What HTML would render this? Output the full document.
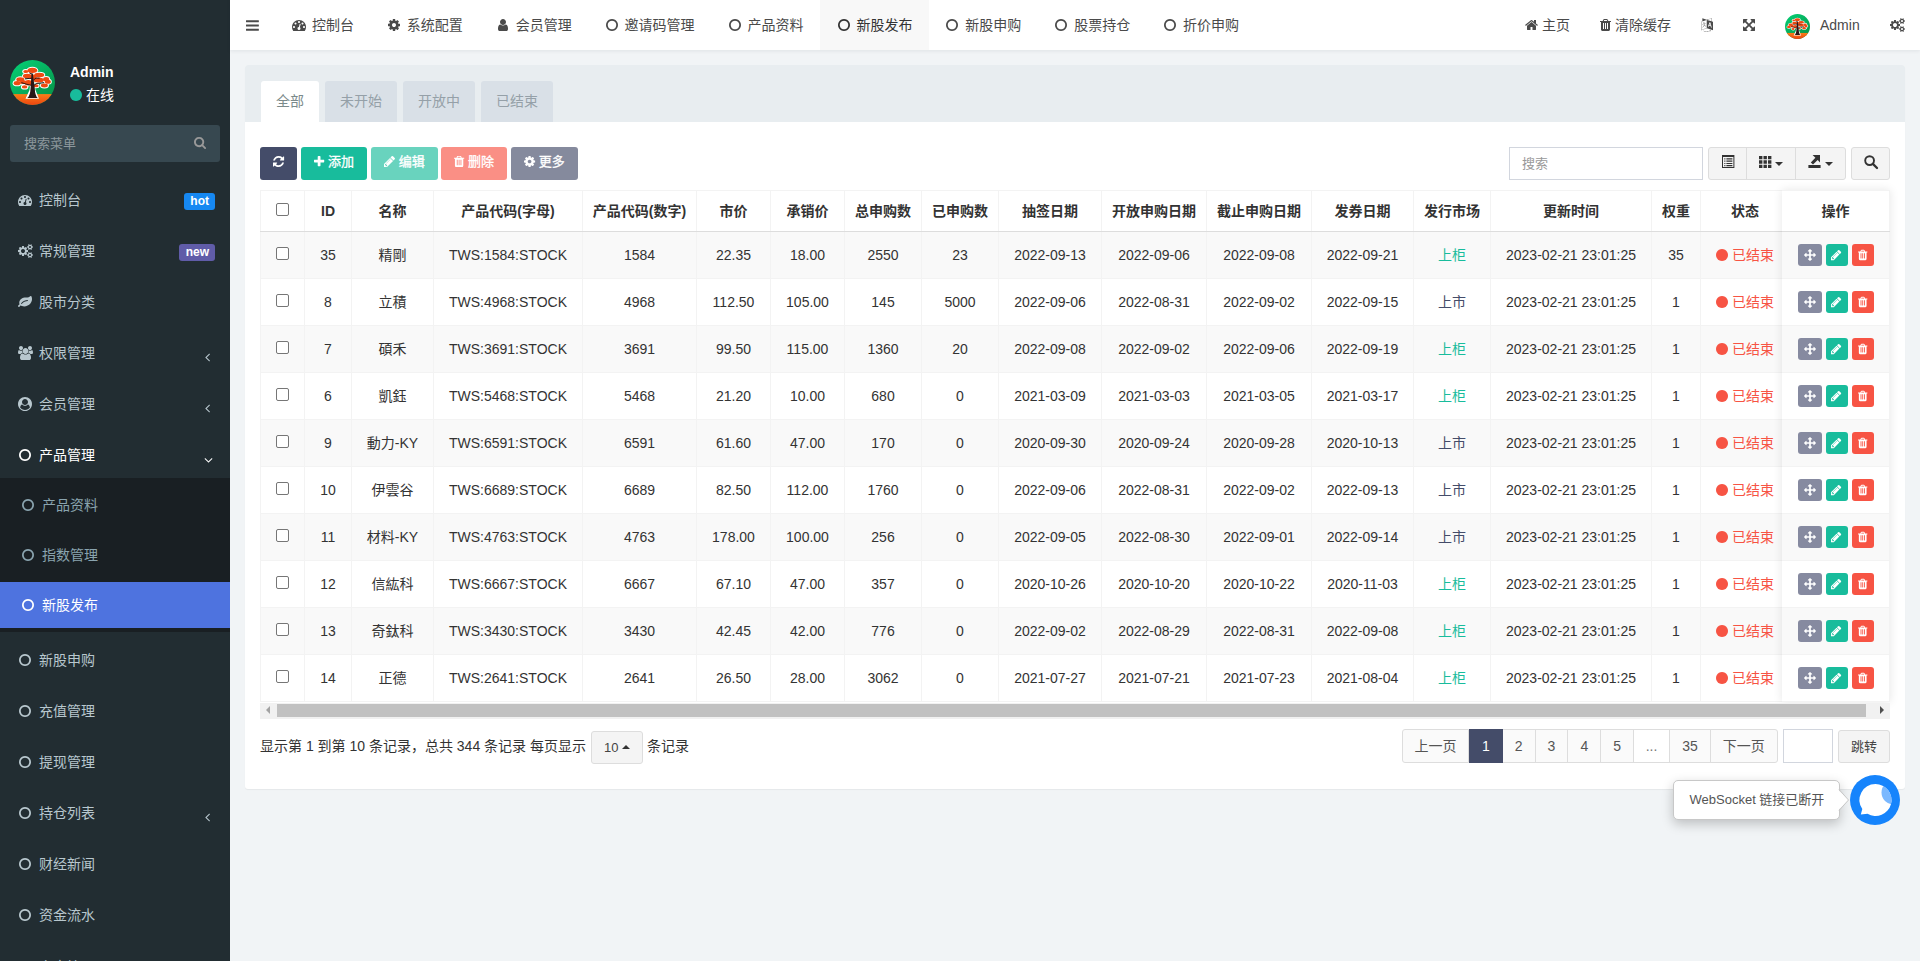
<!DOCTYPE html><html lang="zh-CN"><head><meta charset="utf-8"><title>新股发布</title><style>
*{box-sizing:border-box}
html,body{margin:0;padding:0}
body{width:1920px;height:961px;overflow:hidden;position:relative;background:#f1f4f6;font-family:"Liberation Sans","Noto Sans CJK SC",sans-serif;font-size:14px;line-height:20px;color:#333}
svg{display:inline-block;overflow:visible}
.abs{position:absolute}
#side{position:absolute;left:0;top:0;width:230px;height:961px;background:#222d32;overflow:hidden}
#side .uname{position:absolute;left:70px;top:62px;color:#fff;font-weight:bold;line-height:20px}
#side .ustat{position:absolute;left:70px;top:85px;color:#fff;line-height:20px;white-space:nowrap}
#side .sbox{position:absolute;left:10px;top:125px;width:210px;height:37px;background:#374850;border-radius:3px;color:#8d989d;font-size:13px;line-height:37px;padding-left:14px}
.mi{position:absolute;left:0;width:230px;height:46px;color:#b8c7ce;line-height:20px;padding:13px 5px 13px 15px;white-space:nowrap}
.mi .ib{display:inline-block;width:20px;text-align:center}
.mi.on{color:#fff}
.smi{position:absolute;left:0;width:230px;height:46px;color:#8aa4af;line-height:20px;padding:13px 5px 13px 18px;white-space:nowrap}
.smi .ib{display:inline-block;width:20px;text-align:center}
.smi.on{color:#fff;background:#4e73df}
.lab{position:absolute;right:15px;font-size:12px;font-weight:bold;color:#fff;line-height:12px;padding:2px 6px 3px;border-radius:3px}
.ang{position:absolute;}
#nav{position:absolute;left:230px;top:0;width:1690px;height:50px;background:#fff;box-shadow:0 1px 4px rgba(0,21,41,.08);color:#4a4a4a}
.tab{position:absolute;top:0;height:50px;line-height:50px;white-space:nowrap;padding:0 15px;color:#4a4a4a}
.tab.on{background:#f8f8f8;color:#333}
.nr{position:absolute;top:0;height:50px;line-height:50px;white-space:nowrap;color:#4a4a4a}
#panel{position:absolute;left:245px;top:65px;width:1660px;height:724px;background:#fff;border-radius:3px;box-shadow:0 1px 1px rgba(0,0,0,.05)}
#phead{position:absolute;left:0;top:0;width:1660px;height:57px;background:#e8edf0;border-radius:3px 3px 0 0}
.pt{position:absolute;top:16px;height:41px;line-height:20px;padding:10px 15px;background:#d9e0e7;color:#95a0a8;border-radius:3px 3px 0 0;white-space:nowrap}
.pt.on{background:#fff;color:#7b8a8b}
.btn{position:absolute;top:147px;height:33px;border-radius:3px;color:#fff;font-size:13px;line-height:28px;text-align:center;white-space:nowrap;border:1px solid transparent;-webkit-text-stroke:.3px #fff}
.bd{position:absolute;background:#f4f4f4;border:1px solid #ddd;color:#444}
table{border-collapse:collapse;table-layout:fixed;border-spacing:0}
th,td{padding:0;text-align:center;white-space:nowrap;overflow:hidden;border:1px solid #f3f3f3}
th{font-weight:bold;height:41px;border-bottom:1px solid #ddd;color:#333}
td{height:47px}
tbody tr:nth-child(odd) td{background:#f9f9f9}
tbody tr:nth-child(even) td{background:#fff}
td input,th input{}
.cb{display:inline-block;width:13px;height:13px;border:1px solid #767676;border-radius:2px;background:#fff;vertical-align:0px}
.ab{display:inline-block;height:22px;border-radius:3px;vertical-align:middle;color:#fff;text-align:center;line-height:22px;font-size:12px}
.pg{position:absolute;top:729px;height:34px;border:1px solid #ddd;background:#fafafa;color:#555;text-align:center;line-height:32px}
</style></head><body>
<div id="side">
<svg class="abs" style="left:10px;top:60px;width:45px;height:45px" viewBox="0 0 90 90"><defs><linearGradient id="ag45" x1="0.100" y1="0" x2="0.800" y2="1"><stop offset="0" stop-color="#05cf75"/><stop offset="1" stop-color="#079147"/></linearGradient><linearGradient id="og45" x1="0" y1="0" x2="0" y2="1"><stop offset="0" stop-color="#fa7d17"/><stop offset="1" stop-color="#ec4411"/></linearGradient><clipPath id="ac45"><circle cx="45" cy="45" r="45"/></clipPath></defs><g clip-path="url(#ac45)"><rect width="90" height="90" fill="url(#ag45)"/><rect y="68.200" width="90" height="22" fill="url(#og45)"/><g fill="#fff"><ellipse cx="44.7" cy="20.6" rx="11.7" ry="7.2"/><ellipse cx="31.5" cy="23.0" rx="7.0" ry="5.0"/><ellipse cx="34.4" cy="32.0" rx="10.5" ry="6.5"/><ellipse cx="58.5" cy="29.8" rx="12.0" ry="6.5"/><ellipse cx="20.6" cy="39.0" rx="10.0" ry="6.5"/><ellipse cx="14.3" cy="46.4" rx="9.0" ry="6.3"/><ellipse cx="36.7" cy="45.3" rx="9.5" ry="7.5"/><ellipse cx="57.3" cy="40.1" rx="12.5" ry="7.0"/><ellipse cx="72.2" cy="38.4" rx="8.0" ry="6.5"/><ellipse cx="75.7" cy="43.6" rx="8.0" ry="6.0"/><ellipse cx="29.2" cy="53.9" rx="7.5" ry="5.3"/><ellipse cx="52.2" cy="51.6" rx="7.0" ry="5.0"/><ellipse cx="68.8" cy="51.0" rx="9.0" ry="5.8"/><ellipse cx="46.0" cy="34.0" rx="9.0" ry="7.0"/><ellipse cx="26.0" cy="44.0" rx="8.0" ry="6.0"/><path d="M31 77.500L39 60L41.500 40h7L51 60L58 77.500Z"/></g><g fill="#ee4a11"><ellipse cx="44.7" cy="20.6" rx="9.7" ry="5.2"/><ellipse cx="31.5" cy="23.0" rx="5.0" ry="3.0"/><ellipse cx="34.4" cy="32.0" rx="8.5" ry="4.5"/><ellipse cx="58.5" cy="29.8" rx="10.0" ry="4.5"/><ellipse cx="20.6" cy="39.0" rx="8.0" ry="4.5"/><ellipse cx="14.3" cy="46.4" rx="7.0" ry="4.3"/><ellipse cx="36.7" cy="45.3" rx="7.5" ry="5.5"/><ellipse cx="57.3" cy="40.1" rx="10.5" ry="5.0"/><ellipse cx="72.2" cy="38.4" rx="6.0" ry="4.5"/><ellipse cx="75.7" cy="43.6" rx="6.0" ry="4.0"/><ellipse cx="29.2" cy="53.9" rx="5.5" ry="3.3"/><ellipse cx="52.2" cy="51.6" rx="5.0" ry="3.0"/><ellipse cx="68.8" cy="51.0" rx="7.0" ry="3.8"/><ellipse cx="46.0" cy="34.0" rx="7.0" ry="5.0"/><ellipse cx="26.0" cy="44.0" rx="6.0" ry="4.0"/></g><path d="M34.500 75.800Q40.500 72 41.200 56L43 27h2.600L49.500 56Q50 72 55.500 75.800Z" fill="#2a1717"/><g stroke="#2a1717" stroke-width="2" fill="none" stroke-linecap="round"><path d="M44.500 28.500L39.500 26"/><path d="M43.500 36.500L30.500 37.500"/><path d="M42 50.500L33.500 48.500L23.500 45.500"/><path d="M47 40L52 36L58.500 36.500"/><path d="M48.500 50L54 46.800L67.500 45.500"/></g></g></svg>
<div class="uname">Admin</div>
<div class="ustat"><svg viewBox="0 -1536 1536 1792" style="width:12.00px;height:14px;vertical-align:-2.00px;" fill="#18bc9c"><path transform="scale(1,-1)" d="M1536 640q0 -209 -103 -385.5t-279.5 -279.5t-385.5 -103t-385.5 103t-279.5 279.5t-103 385.5t103 385.5t279.5 279.5t385.5 103t385.5 -103t279.5 -279.5t103 -385.5z"/></svg> 在线</div>
<div class="sbox">搜索菜单<svg viewBox="0 -1536 1664 1792" style="width:12.07px;height:13px;vertical-align:-1.86px;position:absolute;left:184px;top:11px;" fill="#999"><path transform="scale(1,-1)" d="M1152 704q0 185 -131.5 316.5t-316.5 131.5t-316.5 -131.5t-131.5 -316.5t131.5 -316.5t316.5 -131.5t316.5 131.5t131.5 316.5zM1664 -128q0 -52 -38 -90t-90 -38q-54 0 -90 38l-343 342q-179 -124 -399 -124q-143 0 -273.5 55.5t-225 150t-150 225t-55.5 273.5 t55.5 273.5t150 225t225 150t273.5 55.5t273.5 -55.5t225 -150t150 -225t55.5 -273.5q0 -220 -124 -399l343 -343q37 -37 37 -90z"/></svg></div>
<div class="mi" style="top:177px"><span class="ib"><svg viewBox="0 -1536 1792 1792" style="width:14.00px;height:14px;vertical-align:-2.00px;" fill="currentColor"><path transform="scale(1,-1)" d="M384 384q0 53 -37.5 90.5t-90.5 37.5t-90.5 -37.5t-37.5 -90.5t37.5 -90.5t90.5 -37.5t90.5 37.5t37.5 90.5zM576 832q0 53 -37.5 90.5t-90.5 37.5t-90.5 -37.5t-37.5 -90.5t37.5 -90.5t90.5 -37.5t90.5 37.5t37.5 90.5zM1004 351l101 382q6 26 -7.5 48.5t-38.5 29.5 t-48 -6.5t-30 -39.5l-101 -382q-60 -5 -107 -43.5t-63 -98.5q-20 -77 20 -146t117 -89t146 20t89 117q16 60 -6 117t-72 91zM1664 384q0 53 -37.5 90.5t-90.5 37.5t-90.5 -37.5t-37.5 -90.5t37.5 -90.5t90.5 -37.5t90.5 37.5t37.5 90.5zM1024 1024q0 53 -37.5 90.5 t-90.5 37.5t-90.5 -37.5t-37.5 -90.5t37.5 -90.5t90.5 -37.5t90.5 37.5t37.5 90.5zM1472 832q0 53 -37.5 90.5t-90.5 37.5t-90.5 -37.5t-37.5 -90.5t37.5 -90.5t90.5 -37.5t90.5 37.5t37.5 90.5zM1792 384q0 -261 -141 -483q-19 -29 -54 -29h-1402q-35 0 -54 29 q-141 221 -141 483q0 182 71 348t191 286t286 191t348 71t348 -71t286 -191t191 -286t71 -348z"/></svg></span> <span>控制台</span><span class="lab" style="top:16px;background:#1688f2">hot</span></div>
<div class="mi" style="top:228px"><span class="ib"><svg viewBox="0 -1536 1920 1792" style="width:15.00px;height:14px;vertical-align:-2.00px;" fill="currentColor"><path transform="scale(1,-1)" d="M896 640q0 106 -75 181t-181 75t-181 -75t-75 -181t75 -181t181 -75t181 75t75 181zM1664 128q0 52 -38 90t-90 38t-90 -38t-38 -90q0 -53 37.5 -90.5t90.5 -37.5t90.5 37.5t37.5 90.5zM1664 1152q0 52 -38 90t-90 38t-90 -38t-38 -90q0 -53 37.5 -90.5t90.5 -37.5 t90.5 37.5t37.5 90.5zM1280 731v-185q0 -10 -7 -19.5t-16 -10.5l-155 -24q-11 -35 -32 -76q34 -48 90 -115q7 -11 7 -20q0 -12 -7 -19q-23 -30 -82.5 -89.5t-78.5 -59.5q-11 0 -21 7l-115 90q-37 -19 -77 -31q-11 -108 -23 -155q-7 -24 -30 -24h-186q-11 0 -20 7.5t-10 17.5 l-23 153q-34 10 -75 31l-118 -89q-7 -7 -20 -7q-11 0 -21 8q-144 133 -144 160q0 9 7 19q10 14 41 53t47 61q-23 44 -35 82l-152 24q-10 1 -17 9.5t-7 19.5v185q0 10 7 19.5t16 10.5l155 24q11 35 32 76q-34 48 -90 115q-7 11 -7 20q0 12 7 20q22 30 82 89t79 59q11 0 21 -7 l115 -90q34 18 77 32q11 108 23 154q7 24 30 24h186q11 0 20 -7.5t10 -17.5l23 -153q34 -10 75 -31l118 89q8 7 20 7q11 0 21 -8q144 -133 144 -160q0 -8 -7 -19q-12 -16 -42 -54t-45 -60q23 -48 34 -82l152 -23q10 -2 17 -10.5t7 -19.5zM1920 198v-140q0 -16 -149 -31 q-12 -27 -30 -52q51 -113 51 -138q0 -4 -4 -7q-122 -71 -124 -71q-8 0 -46 47t-52 68q-20 -2 -30 -2t-30 2q-14 -21 -52 -68t-46 -47q-2 0 -124 71q-4 3 -4 7q0 25 51 138q-18 25 -30 52q-149 15 -149 31v140q0 16 149 31q13 29 30 52q-51 113 -51 138q0 4 4 7q4 2 35 20 t59 34t30 16q8 0 46 -46.5t52 -67.5q20 2 30 2t30 -2q51 71 92 112l6 2q4 0 124 -70q4 -3 4 -7q0 -25 -51 -138q17 -23 30 -52q149 -15 149 -31zM1920 1222v-140q0 -16 -149 -31q-12 -27 -30 -52q51 -113 51 -138q0 -4 -4 -7q-122 -71 -124 -71q-8 0 -46 47t-52 68 q-20 -2 -30 -2t-30 2q-14 -21 -52 -68t-46 -47q-2 0 -124 71q-4 3 -4 7q0 25 51 138q-18 25 -30 52q-149 15 -149 31v140q0 16 149 31q13 29 30 52q-51 113 -51 138q0 4 4 7q4 2 35 20t59 34t30 16q8 0 46 -46.5t52 -67.5q20 2 30 2t30 -2q51 71 92 112l6 2q4 0 124 -70 q4 -3 4 -7q0 -25 -51 -138q17 -23 30 -52q149 -15 149 -31z"/></svg></span> <span>常规管理</span><span class="lab" style="top:16px;background:#605ca8;padding-left:7px">new</span></div>
<div class="mi" style="top:279px"><span class="ib"><svg viewBox="0 -1536 1792 1792" style="width:14.00px;height:14px;vertical-align:-2.00px;" fill="currentColor"><path transform="scale(1,-1)" d="M1280 832q0 26 -19 45t-45 19q-172 0 -318 -49.5t-259.5 -134t-235.5 -219.5q-19 -21 -19 -45q0 -26 19 -45t45 -19q24 0 45 19q27 24 74 71t67 66q137 124 268.5 176t313.5 52q26 0 45 19t19 45zM1792 1030q0 -95 -20 -193q-46 -224 -184.5 -383t-357.5 -268 q-214 -108 -438 -108q-148 0 -286 47q-15 5 -88 42t-96 37q-16 0 -39.5 -32t-45 -70t-52.5 -70t-60 -32q-43 0 -63.5 17.5t-45.5 59.5q-2 4 -6 11t-5.5 10t-3 9.5t-1.5 13.5q0 35 31 73.5t68 65.5t68 56t31 48q0 4 -14 38t-16 44q-9 51 -9 104q0 115 43.5 220t119 184.5 t170.5 139t204 95.5q55 18 145 25.5t179.5 9t178.5 6t163.5 24t113.5 56.5l29.5 29.5t29.5 28t27 20t36.5 16t43.5 4.5q39 0 70.5 -46t47.5 -112t24 -124t8 -96z"/></svg></span> <span>股市分类</span></div>
<div class="mi" style="top:330px"><span class="ib"><svg viewBox="0 -1536 1920 1792" style="width:15.00px;height:14px;vertical-align:-2.00px;" fill="currentColor"><path transform="scale(1,-1)" d="M593 640q-162 -5 -265 -128h-134q-82 0 -138 40.5t-56 118.5q0 353 124 353q6 0 43.5 -21t97.5 -42.5t119 -21.5q67 0 133 23q-5 -37 -5 -66q0 -139 81 -256zM1664 3q0 -120 -73 -189.5t-194 -69.5h-874q-121 0 -194 69.5t-73 189.5q0 53 3.5 103.5t14 109t26.5 108.5 t43 97.5t62 81t85.5 53.5t111.5 20q10 0 43 -21.5t73 -48t107 -48t135 -21.5t135 21.5t107 48t73 48t43 21.5q61 0 111.5 -20t85.5 -53.5t62 -81t43 -97.5t26.5 -108.5t14 -109t3.5 -103.5zM640 1280q0 -106 -75 -181t-181 -75t-181 75t-75 181t75 181t181 75t181 -75 t75 -181zM1344 896q0 -159 -112.5 -271.5t-271.5 -112.5t-271.5 112.5t-112.5 271.5t112.5 271.5t271.5 112.5t271.5 -112.5t112.5 -271.5zM1920 671q0 -78 -56 -118.5t-138 -40.5h-134q-103 123 -265 128q81 117 81 256q0 29 -5 66q66 -23 133 -23q59 0 119 21.5t97.5 42.5 t43.5 21q124 0 124 -353zM1792 1280q0 -106 -75 -181t-181 -75t-181 75t-75 181t75 181t181 75t181 -75t75 -181z"/></svg></span> <span>权限管理</span><svg viewBox="0 -1536 640 1792" style="width:5.00px;height:14px;vertical-align:-2.00px;position:absolute;left:205px;top:20px;" fill="currentColor"><path transform="scale(1,-1)" d="M627 992q0 -13 -10 -23l-393 -393l393 -393q10 -10 10 -23t-10 -23l-50 -50q-10 -10 -23 -10t-23 10l-466 466q-10 10 -10 23t10 23l466 466q10 10 23 10t23 -10l50 -50q10 -10 10 -23z"/></svg></div>
<div class="mi" style="top:381px"><span class="ib"><svg viewBox="0 -1536 1792 1792" style="width:14.00px;height:14px;vertical-align:-2.00px;" fill="currentColor"><path transform="scale(1,-1)" d="M1523 197q-22 155 -87.5 257.5t-184.5 118.5q-67 -74 -159.5 -115.5t-195.5 -41.5t-195.5 41.5t-159.5 115.5q-119 -16 -184.5 -118.5t-87.5 -257.5q106 -150 271 -237.5t356 -87.5t356 87.5t271 237.5zM1280 896q0 159 -112.5 271.5t-271.5 112.5t-271.5 -112.5 t-112.5 -271.5t112.5 -271.5t271.5 -112.5t271.5 112.5t112.5 271.5zM1792 640q0 -182 -71 -347.5t-190.5 -286t-285.5 -191.5t-349 -71q-182 0 -348 71t-286 191t-191 286t-71 348t71 348t191 286t286 191t348 71t348 -71t286 -191t191 -286t71 -348z"/></svg></span> <span>会员管理</span><svg viewBox="0 -1536 640 1792" style="width:5.00px;height:14px;vertical-align:-2.00px;position:absolute;left:205px;top:20px;" fill="currentColor"><path transform="scale(1,-1)" d="M627 992q0 -13 -10 -23l-393 -393l393 -393q10 -10 10 -23t-10 -23l-50 -50q-10 -10 -23 -10t-23 10l-466 466q-10 10 -10 23t10 23l466 466q10 10 23 10t23 -10l50 -50q10 -10 10 -23z"/></svg></div>
<div class="mi on" style="top:432px"><span class="ib"><svg viewBox="0 -1536 1536 1792" style="width:12.00px;height:14px;vertical-align:-2.00px;" fill="currentColor"><path transform="scale(1,-1)" d="M768 1184q-148 0 -273 -73t-198 -198t-73 -273t73 -273t198 -198t273 -73t273 73t198 198t73 273t-73 273t-198 198t-273 73zM1536 640q0 -209 -103 -385.5t-279.5 -279.5t-385.5 -103t-385.5 103t-279.5 279.5t-103 385.5t103 385.5t279.5 279.5t385.5 103t385.5 -103 t279.5 -279.5t103 -385.5z"/></svg></span> <span>产品管理</span><svg viewBox="0 -1536 1152 1792" style="width:9.00px;height:14px;vertical-align:-2.00px;position:absolute;left:204px;top:21px;" fill="currentColor"><path transform="scale(1,-1)" d="M1075 800q0 -13 -10 -23l-466 -466q-10 -10 -23 -10t-23 10l-466 466q-10 10 -10 23t10 23l50 50q10 10 23 10t23 -10l393 -393l393 393q10 10 23 10t23 -10l50 -50q10 -10 10 -23z"/></svg></div>
<div class="abs" style="left:0;top:478px;width:230px;height:154px;background:#191f23"></div>
<div class="smi" style="top:482px"><span class="ib"><svg viewBox="0 -1536 1536 1792" style="width:12.00px;height:14px;vertical-align:-2.00px;" fill="currentColor"><path transform="scale(1,-1)" d="M768 1184q-148 0 -273 -73t-198 -198t-73 -273t73 -273t198 -198t273 -73t273 73t198 198t73 273t-73 273t-198 198t-273 73zM1536 640q0 -209 -103 -385.5t-279.5 -279.5t-385.5 -103t-385.5 103t-279.5 279.5t-103 385.5t103 385.5t279.5 279.5t385.5 103t385.5 -103 t279.5 -279.5t103 -385.5z"/></svg></span> <span>产品资料</span></div>
<div class="smi" style="top:532px"><span class="ib"><svg viewBox="0 -1536 1536 1792" style="width:12.00px;height:14px;vertical-align:-2.00px;" fill="currentColor"><path transform="scale(1,-1)" d="M768 1184q-148 0 -273 -73t-198 -198t-73 -273t73 -273t198 -198t273 -73t273 73t198 198t73 273t-73 273t-198 198t-273 73zM1536 640q0 -209 -103 -385.5t-279.5 -279.5t-385.5 -103t-385.5 103t-279.5 279.5t-103 385.5t103 385.5t279.5 279.5t385.5 103t385.5 -103 t279.5 -279.5t103 -385.5z"/></svg></span> <span>指数管理</span></div>
<div class="smi on" style="top:582px"><span class="ib"><svg viewBox="0 -1536 1536 1792" style="width:12.00px;height:14px;vertical-align:-2.00px;" fill="currentColor"><path transform="scale(1,-1)" d="M768 1184q-148 0 -273 -73t-198 -198t-73 -273t73 -273t198 -198t273 -73t273 73t198 198t73 273t-73 273t-198 198t-273 73zM1536 640q0 -209 -103 -385.5t-279.5 -279.5t-385.5 -103t-385.5 103t-279.5 279.5t-103 385.5t103 385.5t279.5 279.5t385.5 103t385.5 -103 t279.5 -279.5t103 -385.5z"/></svg></span> <span>新股发布</span></div>
<div class="mi" style="top:637px"><span class="ib"><svg viewBox="0 -1536 1536 1792" style="width:12.00px;height:14px;vertical-align:-2.00px;" fill="currentColor"><path transform="scale(1,-1)" d="M768 1184q-148 0 -273 -73t-198 -198t-73 -273t73 -273t198 -198t273 -73t273 73t198 198t73 273t-73 273t-198 198t-273 73zM1536 640q0 -209 -103 -385.5t-279.5 -279.5t-385.5 -103t-385.5 103t-279.5 279.5t-103 385.5t103 385.5t279.5 279.5t385.5 103t385.5 -103 t279.5 -279.5t103 -385.5z"/></svg></span> <span>新股申购</span></div>
<div class="mi" style="top:688px"><span class="ib"><svg viewBox="0 -1536 1536 1792" style="width:12.00px;height:14px;vertical-align:-2.00px;" fill="currentColor"><path transform="scale(1,-1)" d="M768 1184q-148 0 -273 -73t-198 -198t-73 -273t73 -273t198 -198t273 -73t273 73t198 198t73 273t-73 273t-198 198t-273 73zM1536 640q0 -209 -103 -385.5t-279.5 -279.5t-385.5 -103t-385.5 103t-279.5 279.5t-103 385.5t103 385.5t279.5 279.5t385.5 103t385.5 -103 t279.5 -279.5t103 -385.5z"/></svg></span> <span>充值管理</span></div>
<div class="mi" style="top:739px"><span class="ib"><svg viewBox="0 -1536 1536 1792" style="width:12.00px;height:14px;vertical-align:-2.00px;" fill="currentColor"><path transform="scale(1,-1)" d="M768 1184q-148 0 -273 -73t-198 -198t-73 -273t73 -273t198 -198t273 -73t273 73t198 198t73 273t-73 273t-198 198t-273 73zM1536 640q0 -209 -103 -385.5t-279.5 -279.5t-385.5 -103t-385.5 103t-279.5 279.5t-103 385.5t103 385.5t279.5 279.5t385.5 103t385.5 -103 t279.5 -279.5t103 -385.5z"/></svg></span> <span>提现管理</span></div>
<div class="mi" style="top:790px"><span class="ib"><svg viewBox="0 -1536 1536 1792" style="width:12.00px;height:14px;vertical-align:-2.00px;" fill="currentColor"><path transform="scale(1,-1)" d="M768 1184q-148 0 -273 -73t-198 -198t-73 -273t73 -273t198 -198t273 -73t273 73t198 198t73 273t-73 273t-198 198t-273 73zM1536 640q0 -209 -103 -385.5t-279.5 -279.5t-385.5 -103t-385.5 103t-279.5 279.5t-103 385.5t103 385.5t279.5 279.5t385.5 103t385.5 -103 t279.5 -279.5t103 -385.5z"/></svg></span> <span>持仓列表</span><svg viewBox="0 -1536 640 1792" style="width:5.00px;height:14px;vertical-align:-2.00px;position:absolute;left:205px;top:20px;" fill="currentColor"><path transform="scale(1,-1)" d="M627 992q0 -13 -10 -23l-393 -393l393 -393q10 -10 10 -23t-10 -23l-50 -50q-10 -10 -23 -10t-23 10l-466 466q-10 10 -10 23t10 23l466 466q10 10 23 10t23 -10l50 -50q10 -10 10 -23z"/></svg></div>
<div class="mi" style="top:841px"><span class="ib"><svg viewBox="0 -1536 1536 1792" style="width:12.00px;height:14px;vertical-align:-2.00px;" fill="currentColor"><path transform="scale(1,-1)" d="M768 1184q-148 0 -273 -73t-198 -198t-73 -273t73 -273t198 -198t273 -73t273 73t198 198t73 273t-73 273t-198 198t-273 73zM1536 640q0 -209 -103 -385.5t-279.5 -279.5t-385.5 -103t-385.5 103t-279.5 279.5t-103 385.5t103 385.5t279.5 279.5t385.5 103t385.5 -103 t279.5 -279.5t103 -385.5z"/></svg></span> <span>财经新闻</span></div>
<div class="mi" style="top:892px"><span class="ib"><svg viewBox="0 -1536 1536 1792" style="width:12.00px;height:14px;vertical-align:-2.00px;" fill="currentColor"><path transform="scale(1,-1)" d="M768 1184q-148 0 -273 -73t-198 -198t-73 -273t73 -273t198 -198t273 -73t273 73t198 198t73 273t-73 273t-198 198t-273 73zM1536 640q0 -209 -103 -385.5t-279.5 -279.5t-385.5 -103t-385.5 103t-279.5 279.5t-103 385.5t103 385.5t279.5 279.5t385.5 103t385.5 -103 t279.5 -279.5t103 -385.5z"/></svg></span> <span>资金流水</span></div>
<div class="mi" style="top:944px"><span class="ib"><svg viewBox="0 -1536 2048 1792" style="width:16.00px;height:14px;vertical-align:-2.00px;" fill="currentColor"><path transform="scale(1,-1)" d="M1024 1024h-384v-384h384v384zM1152 384v-128h-640v128h640zM1152 1152v-640h-640v640h640zM1792 384v-128h-512v128h512zM1792 640v-128h-512v128h512zM1792 896v-128h-512v128h512zM1792 1152v-128h-512v128h512zM256 192v960h-128v-960q0 -26 19 -45t45 -19t45 19 t19 45zM1920 192v1088h-1536v-1088q0 -33 -11 -64h1483q26 0 45 19t19 45zM2048 1408v-1216q0 -80 -56 -136t-136 -56h-1664q-80 0 -136 56t-56 136v1088h256v128h1792z"/></svg></span> <span>文章管理</span></div>
</div>
<div id="nav">
<svg viewBox="0 -1536 1536 1792" style="width:12.86px;height:15px;vertical-align:-2.14px;position:absolute;left:16px;top:17.5px;" fill="#4a4a4a"><path transform="scale(1,-1)" d="M1536 192v-128q0 -26 -19 -45t-45 -19h-1408q-26 0 -45 19t-19 45v128q0 26 19 45t45 19h1408q26 0 45 -19t19 -45zM1536 704v-128q0 -26 -19 -45t-45 -19h-1408q-26 0 -45 19t-19 45v128q0 26 19 45t45 19h1408q26 0 45 -19t19 -45zM1536 1216v-128q0 -26 -19 -45 t-45 -19h-1408q-26 0 -45 19t-19 45v128q0 26 19 45t45 19h1408q26 0 45 -19t19 -45z"/></svg>
<div class="tab" style="left:45.0px;width:95.0px"><svg viewBox="0 -1536 1792 1792" style="width:14.00px;height:14px;vertical-align:-2.00px;margin:0 2.00px;" fill="currentColor"><path transform="scale(1,-1)" d="M384 384q0 53 -37.5 90.5t-90.5 37.5t-90.5 -37.5t-37.5 -90.5t37.5 -90.5t90.5 -37.5t90.5 37.5t37.5 90.5zM576 832q0 53 -37.5 90.5t-90.5 37.5t-90.5 -37.5t-37.5 -90.5t37.5 -90.5t90.5 -37.5t90.5 37.5t37.5 90.5zM1004 351l101 382q6 26 -7.5 48.5t-38.5 29.5 t-48 -6.5t-30 -39.5l-101 -382q-60 -5 -107 -43.5t-63 -98.5q-20 -77 20 -146t117 -89t146 20t89 117q16 60 -6 117t-72 91zM1664 384q0 53 -37.5 90.5t-90.5 37.5t-90.5 -37.5t-37.5 -90.5t37.5 -90.5t90.5 -37.5t90.5 37.5t37.5 90.5zM1024 1024q0 53 -37.5 90.5 t-90.5 37.5t-90.5 -37.5t-37.5 -90.5t37.5 -90.5t90.5 -37.5t90.5 37.5t37.5 90.5zM1472 832q0 53 -37.5 90.5t-90.5 37.5t-90.5 -37.5t-37.5 -90.5t37.5 -90.5t90.5 -37.5t90.5 37.5t37.5 90.5zM1792 384q0 -261 -141 -483q-19 -29 -54 -29h-1402q-35 0 -54 29 q-141 221 -141 483q0 182 71 348t191 286t286 191t348 71t348 -71t286 -191t191 -286t71 -348z"/></svg> 控制台</div>
<div class="tab" style="left:139.9px;width:109.0px"><svg viewBox="0 -1536 1536 1792" style="width:12.00px;height:14px;vertical-align:-2.00px;margin:0 3.00px;" fill="currentColor"><path transform="scale(1,-1)" d="M1024 640q0 106 -75 181t-181 75t-181 -75t-75 -181t75 -181t181 -75t181 75t75 181zM1536 749v-222q0 -12 -8 -23t-20 -13l-185 -28q-19 -54 -39 -91q35 -50 107 -138q10 -12 10 -25t-9 -23q-27 -37 -99 -108t-94 -71q-12 0 -26 9l-138 108q-44 -23 -91 -38 q-16 -136 -29 -186q-7 -28 -36 -28h-222q-14 0 -24.5 8.5t-11.5 21.5l-28 184q-49 16 -90 37l-141 -107q-10 -9 -25 -9q-14 0 -25 11q-126 114 -165 168q-7 10 -7 23q0 12 8 23q15 21 51 66.5t54 70.5q-27 50 -41 99l-183 27q-13 2 -21 12.5t-8 23.5v222q0 12 8 23t19 13 l186 28q14 46 39 92q-40 57 -107 138q-10 12 -10 24q0 10 9 23q26 36 98.5 107.5t94.5 71.5q13 0 26 -10l138 -107q44 23 91 38q16 136 29 186q7 28 36 28h222q14 0 24.5 -8.5t11.5 -21.5l28 -184q49 -16 90 -37l142 107q9 9 24 9q13 0 25 -10q129 -119 165 -170q7 -8 7 -22 q0 -12 -8 -23q-15 -21 -51 -66.5t-54 -70.5q26 -50 41 -98l183 -28q13 -2 21 -12.5t8 -23.5z"/></svg> 系统配置</div>
<div class="tab" style="left:248.8px;width:109.0px"><svg viewBox="0 -1536 1280 1792" style="width:10.00px;height:14px;vertical-align:-2.00px;margin:0 4.00px;" fill="currentColor"><path transform="scale(1,-1)" d="M1280 137q0 -109 -62.5 -187t-150.5 -78h-854q-88 0 -150.5 78t-62.5 187q0 85 8.5 160.5t31.5 152t58.5 131t94 89t134.5 34.5q131 -128 313 -128t313 128q76 0 134.5 -34.5t94 -89t58.5 -131t31.5 -152t8.5 -160.5zM1024 1024q0 -159 -112.5 -271.5t-271.5 -112.5 t-271.5 112.5t-112.5 271.5t112.5 271.5t271.5 112.5t271.5 -112.5t112.5 -271.5z"/></svg> 会员管理</div>
<div class="tab" style="left:357.7px;width:123.0px"><svg viewBox="0 -1536 1536 1792" style="width:12.00px;height:14px;vertical-align:-2.00px;margin:0 3.00px;" fill="currentColor"><path transform="scale(1,-1)" d="M768 1184q-148 0 -273 -73t-198 -198t-73 -273t73 -273t198 -198t273 -73t273 73t198 198t73 273t-73 273t-198 198t-273 73zM1536 640q0 -209 -103 -385.5t-279.5 -279.5t-385.5 -103t-385.5 103t-279.5 279.5t-103 385.5t103 385.5t279.5 279.5t385.5 103t385.5 -103 t279.5 -279.5t103 -385.5z"/></svg> 邀请码管理</div>
<div class="tab" style="left:480.6px;width:109.0px"><svg viewBox="0 -1536 1536 1792" style="width:12.00px;height:14px;vertical-align:-2.00px;margin:0 3.00px;" fill="currentColor"><path transform="scale(1,-1)" d="M768 1184q-148 0 -273 -73t-198 -198t-73 -273t73 -273t198 -198t273 -73t273 73t198 198t73 273t-73 273t-198 198t-273 73zM1536 640q0 -209 -103 -385.5t-279.5 -279.5t-385.5 -103t-385.5 103t-279.5 279.5t-103 385.5t103 385.5t279.5 279.5t385.5 103t385.5 -103 t279.5 -279.5t103 -385.5z"/></svg> 产品资料</div>
<div class="tab on" style="left:589.5px;width:109.0px"><svg viewBox="0 -1536 1536 1792" style="width:12.00px;height:14px;vertical-align:-2.00px;margin:0 3.00px;" fill="currentColor"><path transform="scale(1,-1)" d="M768 1184q-148 0 -273 -73t-198 -198t-73 -273t73 -273t198 -198t273 -73t273 73t198 198t73 273t-73 273t-198 198t-273 73zM1536 640q0 -209 -103 -385.5t-279.5 -279.5t-385.5 -103t-385.5 103t-279.5 279.5t-103 385.5t103 385.5t279.5 279.5t385.5 103t385.5 -103 t279.5 -279.5t103 -385.5z"/></svg> 新股发布</div>
<div class="tab" style="left:698.4px;width:109.0px"><svg viewBox="0 -1536 1536 1792" style="width:12.00px;height:14px;vertical-align:-2.00px;margin:0 3.00px;" fill="currentColor"><path transform="scale(1,-1)" d="M768 1184q-148 0 -273 -73t-198 -198t-73 -273t73 -273t198 -198t273 -73t273 73t198 198t73 273t-73 273t-198 198t-273 73zM1536 640q0 -209 -103 -385.5t-279.5 -279.5t-385.5 -103t-385.5 103t-279.5 279.5t-103 385.5t103 385.5t279.5 279.5t385.5 103t385.5 -103 t279.5 -279.5t103 -385.5z"/></svg> 新股申购</div>
<div class="tab" style="left:807.3px;width:109.0px"><svg viewBox="0 -1536 1536 1792" style="width:12.00px;height:14px;vertical-align:-2.00px;margin:0 3.00px;" fill="currentColor"><path transform="scale(1,-1)" d="M768 1184q-148 0 -273 -73t-198 -198t-73 -273t73 -273t198 -198t273 -73t273 73t198 198t73 273t-73 273t-198 198t-273 73zM1536 640q0 -209 -103 -385.5t-279.5 -279.5t-385.5 -103t-385.5 103t-279.5 279.5t-103 385.5t103 385.5t279.5 279.5t385.5 103t385.5 -103 t279.5 -279.5t103 -385.5z"/></svg> 股票持仓</div>
<div class="tab" style="left:916.2px;width:109.0px"><svg viewBox="0 -1536 1536 1792" style="width:12.00px;height:14px;vertical-align:-2.00px;margin:0 3.00px;" fill="currentColor"><path transform="scale(1,-1)" d="M768 1184q-148 0 -273 -73t-198 -198t-73 -273t73 -273t198 -198t273 -73t273 73t198 198t73 273t-73 273t-198 198t-273 73zM1536 640q0 -209 -103 -385.5t-279.5 -279.5t-385.5 -103t-385.5 103t-279.5 279.5t-103 385.5t103 385.5t279.5 279.5t385.5 103t385.5 -103 t279.5 -279.5t103 -385.5z"/></svg> 折价申购</div>
<div class="nr" style="left:1295px"><svg viewBox="0 -1536 1664 1792" style="width:13.00px;height:14px;vertical-align:-2.00px;" fill="currentColor"><path transform="scale(1,-1)" d="M1408 544v-480q0 -26 -19 -45t-45 -19h-384v384h-256v-384h-384q-26 0 -45 19t-19 45v480q0 1 0.5 3t0.5 3l575 474l575 -474q1 -2 1 -6zM1631 613l-62 -74q-8 -9 -21 -11h-3q-13 0 -21 7l-692 577l-692 -577q-12 -8 -24 -7q-13 2 -21 11l-62 74q-8 10 -7 23.5t11 21.5 l719 599q32 26 76 26t76 -26l244 -204v195q0 14 9 23t23 9h192q14 0 23 -9t9 -23v-408l219 -182q10 -8 11 -21.5t-7 -23.5z"/></svg> 主页</div>
<div class="nr" style="left:1370px"><svg viewBox="0 -1536 1408 1792" style="width:11.00px;height:14px;vertical-align:-2.00px;" fill="currentColor"><path transform="scale(1,-1)" d="M512 160v704q0 14 -9 23t-23 9h-64q-14 0 -23 -9t-9 -23v-704q0 -14 9 -23t23 -9h64q14 0 23 9t9 23zM768 160v704q0 14 -9 23t-23 9h-64q-14 0 -23 -9t-9 -23v-704q0 -14 9 -23t23 -9h64q14 0 23 9t9 23zM1024 160v704q0 14 -9 23t-23 9h-64q-14 0 -23 -9t-9 -23v-704 q0 -14 9 -23t23 -9h64q14 0 23 9t9 23zM480 1152h448l-48 117q-7 9 -17 11h-317q-10 -2 -17 -11zM1408 1120v-64q0 -14 -9 -23t-23 -9h-96v-948q0 -83 -47 -143.5t-113 -60.5h-832q-66 0 -113 58.5t-47 141.5v952h-96q-14 0 -23 9t-9 23v64q0 14 9 23t23 9h309l70 167 q15 37 54 63t79 26h320q40 0 79 -26t54 -63l70 -167h309q14 0 23 -9t9 -23z"/></svg> 清除缓存</div>
<div class="nr" style="left:1471px"><svg viewBox="0 -1536 1536 1792" style="width:12.00px;height:14px;vertical-align:-2.00px;" fill="currentColor"><path transform="scale(1,-1)" d="M654 458q-1 -3 -12.5 0.5t-31.5 11.5l-20 9q-44 20 -87 49q-7 5 -41 31.5t-38 28.5q-67 -103 -134 -181q-81 -95 -105 -110q-4 -2 -19.5 -4t-18.5 0q6 4 82 92q21 24 85.5 115t78.5 118q17 30 51 98.5t36 77.5q-8 1 -110 -33q-8 -2 -27.5 -7.5t-34.5 -9.5t-17 -5 q-2 -2 -2 -10.5t-1 -9.5q-5 -10 -31 -15q-23 -7 -47 0q-18 4 -28 21q-4 6 -5 23q6 2 24.5 5t29.5 6q58 16 105 32q100 35 102 35q10 2 43 19.5t44 21.5q9 3 21.5 8t14.5 5.5t6 -0.5q2 -12 -1 -33q0 -2 -12.5 -27t-26.5 -53.5t-17 -33.5q-25 -50 -77 -131l64 -28 q12 -6 74.5 -32t67.5 -28q4 -1 10.5 -25.5t4.5 -30.5zM449 944q3 -15 -4 -28q-12 -23 -50 -38q-30 -12 -60 -12q-26 3 -49 26q-14 15 -18 41l1 3q3 -3 19.5 -5t26.5 0t58 16q36 12 55 14q17 0 21 -17zM1147 815l63 -227l-139 42zM39 15l694 232v1032l-694 -233v-1031z M1280 332l102 -31l-181 657l-100 31l-216 -536l102 -31l45 110l211 -65zM777 1294l573 -184v380zM1088 -29l158 -13l-54 -160l-40 66q-130 -83 -276 -108q-58 -12 -91 -12h-84q-79 0 -199.5 39t-183.5 85q-8 7 -8 16q0 8 5 13.5t13 5.5q4 0 18 -7.5t30.5 -16.5t20.5 -11 q73 -37 159.5 -61.5t157.5 -24.5q95 0 167 14.5t157 50.5q15 7 30.5 15.5t34 19t28.5 16.5zM1536 1050v-1079l-774 246q-14 -6 -375 -127.5t-368 -121.5q-13 0 -18 13q0 1 -1 3v1078q3 9 4 10q5 6 20 11q107 36 149 50v384l558 -198q2 0 160.5 55t316 108.5t161.5 53.5 q20 0 20 -21v-418z"/></svg></div>
<div class="nr" style="left:1513px"><svg viewBox="0 -1536 1536 1792" style="width:12.00px;height:14px;vertical-align:-2.00px;" fill="currentColor"><path transform="scale(1,-1)" d="M1283 995l-355 -355l355 -355l144 144q29 31 70 14q39 -17 39 -59v-448q0 -26 -19 -45t-45 -19h-448q-42 0 -59 40q-17 39 14 69l144 144l-355 355l-355 -355l144 -144q31 -30 14 -69q-17 -40 -59 -40h-448q-26 0 -45 19t-19 45v448q0 42 40 59q39 17 69 -14l144 -144 l355 355l-355 355l-144 -144q-19 -19 -45 -19q-12 0 -24 5q-40 17 -40 59v448q0 26 19 45t45 19h448q42 0 59 -40q17 -39 -14 -69l-144 -144l355 -355l355 355l-144 144q-31 30 -14 69q17 40 59 40h448q26 0 45 -19t19 -45v-448q0 -42 -39 -59q-13 -5 -25 -5q-26 0 -45 19z"/></svg></div>
<svg class="abs" style="left:1555px;top:14px;width:25px;height:25px" viewBox="0 0 90 90"><defs><linearGradient id="ag25" x1="0.100" y1="0" x2="0.800" y2="1"><stop offset="0" stop-color="#05cf75"/><stop offset="1" stop-color="#079147"/></linearGradient><linearGradient id="og25" x1="0" y1="0" x2="0" y2="1"><stop offset="0" stop-color="#fa7d17"/><stop offset="1" stop-color="#ec4411"/></linearGradient><clipPath id="ac25"><circle cx="45" cy="45" r="45"/></clipPath></defs><g clip-path="url(#ac25)"><rect width="90" height="90" fill="url(#ag25)"/><rect y="68.200" width="90" height="22" fill="url(#og25)"/><g fill="#fff"><ellipse cx="44.7" cy="20.6" rx="11.7" ry="7.2"/><ellipse cx="31.5" cy="23.0" rx="7.0" ry="5.0"/><ellipse cx="34.4" cy="32.0" rx="10.5" ry="6.5"/><ellipse cx="58.5" cy="29.8" rx="12.0" ry="6.5"/><ellipse cx="20.6" cy="39.0" rx="10.0" ry="6.5"/><ellipse cx="14.3" cy="46.4" rx="9.0" ry="6.3"/><ellipse cx="36.7" cy="45.3" rx="9.5" ry="7.5"/><ellipse cx="57.3" cy="40.1" rx="12.5" ry="7.0"/><ellipse cx="72.2" cy="38.4" rx="8.0" ry="6.5"/><ellipse cx="75.7" cy="43.6" rx="8.0" ry="6.0"/><ellipse cx="29.2" cy="53.9" rx="7.5" ry="5.3"/><ellipse cx="52.2" cy="51.6" rx="7.0" ry="5.0"/><ellipse cx="68.8" cy="51.0" rx="9.0" ry="5.8"/><ellipse cx="46.0" cy="34.0" rx="9.0" ry="7.0"/><ellipse cx="26.0" cy="44.0" rx="8.0" ry="6.0"/><path d="M31 77.500L39 60L41.500 40h7L51 60L58 77.500Z"/></g><g fill="#ee4a11"><ellipse cx="44.7" cy="20.6" rx="9.7" ry="5.2"/><ellipse cx="31.5" cy="23.0" rx="5.0" ry="3.0"/><ellipse cx="34.4" cy="32.0" rx="8.5" ry="4.5"/><ellipse cx="58.5" cy="29.8" rx="10.0" ry="4.5"/><ellipse cx="20.6" cy="39.0" rx="8.0" ry="4.5"/><ellipse cx="14.3" cy="46.4" rx="7.0" ry="4.3"/><ellipse cx="36.7" cy="45.3" rx="7.5" ry="5.5"/><ellipse cx="57.3" cy="40.1" rx="10.5" ry="5.0"/><ellipse cx="72.2" cy="38.4" rx="6.0" ry="4.5"/><ellipse cx="75.7" cy="43.6" rx="6.0" ry="4.0"/><ellipse cx="29.2" cy="53.9" rx="5.5" ry="3.3"/><ellipse cx="52.2" cy="51.6" rx="5.0" ry="3.0"/><ellipse cx="68.8" cy="51.0" rx="7.0" ry="3.8"/><ellipse cx="46.0" cy="34.0" rx="7.0" ry="5.0"/><ellipse cx="26.0" cy="44.0" rx="6.0" ry="4.0"/></g><path d="M34.500 75.800Q40.500 72 41.200 56L43 27h2.600L49.500 56Q50 72 55.500 75.800Z" fill="#2a1717"/><g stroke="#2a1717" stroke-width="2" fill="none" stroke-linecap="round"><path d="M44.500 28.500L39.500 26"/><path d="M43.500 36.500L30.500 37.500"/><path d="M42 50.500L33.500 48.500L23.500 45.500"/><path d="M47 40L52 36L58.500 36.500"/><path d="M48.500 50L54 46.800L67.500 45.500"/></g></g></svg>
<div class="nr" style="left:1590px">Admin</div>
<div class="nr" style="left:1660px"><svg viewBox="0 -1536 1920 1792" style="width:15.00px;height:14px;vertical-align:-2.00px;" fill="currentColor"><path transform="scale(1,-1)" d="M896 640q0 106 -75 181t-181 75t-181 -75t-75 -181t75 -181t181 -75t181 75t75 181zM1664 128q0 52 -38 90t-90 38t-90 -38t-38 -90q0 -53 37.5 -90.5t90.5 -37.5t90.5 37.5t37.5 90.5zM1664 1152q0 52 -38 90t-90 38t-90 -38t-38 -90q0 -53 37.5 -90.5t90.5 -37.5 t90.5 37.5t37.5 90.5zM1280 731v-185q0 -10 -7 -19.5t-16 -10.5l-155 -24q-11 -35 -32 -76q34 -48 90 -115q7 -11 7 -20q0 -12 -7 -19q-23 -30 -82.5 -89.5t-78.5 -59.5q-11 0 -21 7l-115 90q-37 -19 -77 -31q-11 -108 -23 -155q-7 -24 -30 -24h-186q-11 0 -20 7.5t-10 17.5 l-23 153q-34 10 -75 31l-118 -89q-7 -7 -20 -7q-11 0 -21 8q-144 133 -144 160q0 9 7 19q10 14 41 53t47 61q-23 44 -35 82l-152 24q-10 1 -17 9.5t-7 19.5v185q0 10 7 19.5t16 10.5l155 24q11 35 32 76q-34 48 -90 115q-7 11 -7 20q0 12 7 20q22 30 82 89t79 59q11 0 21 -7 l115 -90q34 18 77 32q11 108 23 154q7 24 30 24h186q11 0 20 -7.5t10 -17.5l23 -153q34 -10 75 -31l118 89q8 7 20 7q11 0 21 -8q144 -133 144 -160q0 -8 -7 -19q-12 -16 -42 -54t-45 -60q23 -48 34 -82l152 -23q10 -2 17 -10.5t7 -19.5zM1920 198v-140q0 -16 -149 -31 q-12 -27 -30 -52q51 -113 51 -138q0 -4 -4 -7q-122 -71 -124 -71q-8 0 -46 47t-52 68q-20 -2 -30 -2t-30 2q-14 -21 -52 -68t-46 -47q-2 0 -124 71q-4 3 -4 7q0 25 51 138q-18 25 -30 52q-149 15 -149 31v140q0 16 149 31q13 29 30 52q-51 113 -51 138q0 4 4 7q4 2 35 20 t59 34t30 16q8 0 46 -46.5t52 -67.5q20 2 30 2t30 -2q51 71 92 112l6 2q4 0 124 -70q4 -3 4 -7q0 -25 -51 -138q17 -23 30 -52q149 -15 149 -31zM1920 1222v-140q0 -16 -149 -31q-12 -27 -30 -52q51 -113 51 -138q0 -4 -4 -7q-122 -71 -124 -71q-8 0 -46 47t-52 68 q-20 -2 -30 -2t-30 2q-14 -21 -52 -68t-46 -47q-2 0 -124 71q-4 3 -4 7q0 25 51 138q-18 25 -30 52q-149 15 -149 31v140q0 16 149 31q13 29 30 52q-51 113 -51 138q0 4 4 7q4 2 35 20t59 34t30 16q8 0 46 -46.5t52 -67.5q20 2 30 2t30 -2q51 71 92 112l6 2q4 0 124 -70 q4 -3 4 -7q0 -25 -51 -138q17 -23 30 -52q149 -15 149 -31z"/></svg></div>
</div>
<div id="panel"><div id="phead">
<div class="pt on" style="left:16px;width:58px">全部</div>
<div class="pt" style="left:80px;width:72px">未开始</div>
<div class="pt" style="left:158px;width:72px">开放中</div>
<div class="pt" style="left:236px;width:72px">已结束</div>
</div></div>
<div class="btn" style="left:260px;width:37px;background:#444c69"><svg viewBox="0 -1536 1536 1792" style="width:11.14px;height:13px;vertical-align:-1.86px;" fill="currentColor"><path transform="scale(1,-1)" d="M1511 480q0 -5 -1 -7q-64 -268 -268 -434.5t-478 -166.5q-146 0 -282.5 55t-243.5 157l-129 -129q-19 -19 -45 -19t-45 19t-19 45v448q0 26 19 45t45 19h448q26 0 45 -19t19 -45t-19 -45l-137 -137q71 -66 161 -102t187 -36q134 0 250 65t186 179q11 17 53 117 q8 23 30 23h192q13 0 22.5 -9.5t9.5 -22.5zM1536 1280v-448q0 -26 -19 -45t-45 -19h-448q-26 0 -45 19t-19 45t19 45l138 138q-148 137 -349 137q-134 0 -250 -65t-186 -179q-11 -17 -53 -117q-8 -23 -30 -23h-199q-13 0 -22.5 9.5t-9.5 22.5v7q65 268 270 434.5t480 166.5 q146 0 284 -55.5t245 -156.5l130 129q19 19 45 19t45 -19t19 -45z"/></svg></div>
<div class="btn" style="left:301px;width:66px;background:#18bc9c"><svg viewBox="0 -1536 1408 1792" style="width:10.21px;height:13px;vertical-align:-1.86px;" fill="currentColor"><path transform="scale(1,-1)" d="M1408 800v-192q0 -40 -28 -68t-68 -28h-416v-416q0 -40 -28 -68t-68 -28h-192q-40 0 -68 28t-28 68v416h-416q-40 0 -68 28t-28 68v192q0 40 28 68t68 28h416v416q0 40 28 68t68 28h192q40 0 68 -28t28 -68v-416h416q40 0 68 -28t28 -68z"/></svg> 添加</div>
<div class="btn" style="left:371px;width:67px;background:#69d3be"><svg viewBox="0 -1536 1536 1792" style="width:11.14px;height:13px;vertical-align:-1.86px;" fill="currentColor"><path transform="scale(1,-1)" d="M363 0l91 91l-235 235l-91 -91v-107h128v-128h107zM886 928q0 22 -22 22q-10 0 -17 -7l-542 -542q-7 -7 -7 -17q0 -22 22 -22q10 0 17 7l542 542q7 7 7 17zM832 1120l416 -416l-832 -832h-416v416zM1515 1024q0 -53 -37 -90l-166 -166l-416 416l166 165q36 38 90 38 q53 0 91 -38l235 -234q37 -39 37 -91z"/></svg> 编辑</div>
<div class="btn" style="left:441px;width:66px;background:#fa8f85"><svg viewBox="0 -1536 1408 1792" style="width:10.21px;height:13px;vertical-align:-1.86px;" fill="currentColor"><path transform="scale(1,-1)" d="M512 160v704q0 14 -9 23t-23 9h-64q-14 0 -23 -9t-9 -23v-704q0 -14 9 -23t23 -9h64q14 0 23 9t9 23zM768 160v704q0 14 -9 23t-23 9h-64q-14 0 -23 -9t-9 -23v-704q0 -14 9 -23t23 -9h64q14 0 23 9t9 23zM1024 160v704q0 14 -9 23t-23 9h-64q-14 0 -23 -9t-9 -23v-704 q0 -14 9 -23t23 -9h64q14 0 23 9t9 23zM480 1152h448l-48 117q-7 9 -17 11h-317q-10 -2 -17 -11zM1408 1120v-64q0 -14 -9 -23t-23 -9h-96v-948q0 -83 -47 -143.5t-113 -60.5h-832q-66 0 -113 58.5t-47 141.5v952h-96q-14 0 -23 9t-9 23v64q0 14 9 23t23 9h309l70 167 q15 37 54 63t79 26h320q40 0 79 -26t54 -63l70 -167h309q14 0 23 -9t9 -23z"/></svg> 删除</div>
<div class="btn" style="left:511px;width:67px;background:#858a9d"><svg viewBox="0 -1536 1536 1792" style="width:11.14px;height:13px;vertical-align:-1.86px;" fill="currentColor"><path transform="scale(1,-1)" d="M1024 640q0 106 -75 181t-181 75t-181 -75t-75 -181t75 -181t181 -75t181 75t75 181zM1536 749v-222q0 -12 -8 -23t-20 -13l-185 -28q-19 -54 -39 -91q35 -50 107 -138q10 -12 10 -25t-9 -23q-27 -37 -99 -108t-94 -71q-12 0 -26 9l-138 108q-44 -23 -91 -38 q-16 -136 -29 -186q-7 -28 -36 -28h-222q-14 0 -24.5 8.5t-11.5 21.5l-28 184q-49 16 -90 37l-141 -107q-10 -9 -25 -9q-14 0 -25 11q-126 114 -165 168q-7 10 -7 23q0 12 8 23q15 21 51 66.5t54 70.5q-27 50 -41 99l-183 27q-13 2 -21 12.5t-8 23.5v222q0 12 8 23t19 13 l186 28q14 46 39 92q-40 57 -107 138q-10 12 -10 24q0 10 9 23q26 36 98.5 107.5t94.5 71.5q13 0 26 -10l138 -107q44 23 91 38q16 136 29 186q7 28 36 28h222q14 0 24.5 -8.5t11.5 -21.5l28 -184q49 -16 90 -37l142 107q9 9 24 9q13 0 25 -10q129 -119 165 -170q7 -8 7 -22 q0 -12 -8 -23q-15 -21 -51 -66.5t-54 -70.5q26 -50 41 -98l183 -28q13 -2 21 -12.5t8 -23.5z"/></svg> 更多</div>
<div class="abs" style="left:1509px;top:147px;width:194px;height:33px;border:1px solid #d2d6de;background:#fff;color:#999;font-size:13px;line-height:31px;padding-left:12px">搜索</div>
<div class="bd" style="left:1708px;top:147px;width:138px;height:33px;border-radius:3px"></div>
<div class="abs" style="left:1746px;top:147px;width:1px;height:33px;background:#ddd"></div>
<div class="abs" style="left:1795px;top:147px;width:1px;height:33px;background:#ddd"></div>
<svg class="abs" style="left:1721.8px;top:155px;width:12.4px;height:13px" viewBox="0 0 12.4 13" fill="#333"><path fill-rule="evenodd" d="M0 0h12.4v13H0z M1 2v10h10.4V2z"/><path d="M2.3 3.3h1.1v1.1H2.3z M4.4 3.3h6v1.1h-6z M2.3 5.6h1.1v1.1H2.3z M4.4 5.6h6v1.1h-6z M2.3 7.9h1.1v1.1H2.3z M4.4 7.9h6v1.1h-6z M2.3 10.1h1.1v1.1H2.3z M4.4 10.1h6v1.1h-6z"/></svg>
<svg class="abs" style="left:1758.8px;top:156px;width:12.4px;height:12px" viewBox="0 0 12.4 12" fill="#333"><path d="M0 0h3.4v3.3H0z M4.5 0h3.4v3.3H4.5z M9 0h3.4v3.3H9z M0 4.35h3.4v3.3H0z M4.5 4.35h3.4v3.3H4.5z M9 4.35h3.4v3.3H9z M0 8.7h3.4v3.3H0z M4.5 8.7h3.4v3.3H4.5z M9 8.7h3.4v3.3H9z"/></svg>
<div class="abs" style="left:1775px;top:162px;border-top:4px solid #333;border-left:4px solid transparent;border-right:4px solid transparent"></div>
<svg class="abs" style="left:1808px;top:155px;width:13px;height:13px" viewBox="0 0 13 13" fill="#333"><path d="M0.4 10H12.6V13H0.4Z M4.6 0H12V7.4L9.7 5.1L5 9.6L2.8 7.4L7.4 2.8Z"/></svg>
<div class="abs" style="left:1825px;top:162px;border-top:4px solid #333;border-left:4px solid transparent;border-right:4px solid transparent"></div>
<div class="bd" style="left:1851px;top:147px;width:39px;height:33px;border-radius:3px"></div>
<svg class="abs" style="left:1863.5px;top:154.5px;width:14px;height:14px" viewBox="0 0 14 14" fill="none" stroke="#333"><circle cx="5.6" cy="5.6" r="4.4" stroke-width="1.9"/><path d="M8.9 8.9L13 13" stroke-width="2.3" stroke-linecap="round"/></svg>
<div class="abs" style="left:260px;top:190px;width:1630px;height:512px;overflow:hidden">
<table style="width:1640px"><colgroup>
<col style="width:44px">
<col style="width:47px">
<col style="width:82px">
<col style="width:149px">
<col style="width:114px">
<col style="width:74px">
<col style="width:74px">
<col style="width:77px">
<col style="width:77px">
<col style="width:103px">
<col style="width:105px">
<col style="width:105px">
<col style="width:102px">
<col style="width:77px">
<col style="width:161px">
<col style="width:49px">
<col style="width:89px">
<col style="width:111px">
</colgroup><thead><tr>
<th><span class="cb"></span></th>
<th>ID</th>
<th>名称</th>
<th>产品代码(字母)</th>
<th>产品代码(数字)</th>
<th>市价</th>
<th>承销价</th>
<th>总申购数</th>
<th>已申购数</th>
<th>抽签日期</th>
<th>开放申购日期</th>
<th>截止申购日期</th>
<th>发券日期</th>
<th>发行市场</th>
<th>更新时间</th>
<th>权重</th>
<th>状态</th>
<th>操作</th>
</tr></thead><tbody>
<tr><td><span class="cb"></span></td>
<td>35</td>
<td>精剛</td>
<td>TWS:1584:STOCK</td>
<td>1584</td>
<td>22.35</td>
<td>18.00</td>
<td>2550</td>
<td>23</td>
<td>2022-09-13</td>
<td>2022-09-06</td>
<td>2022-09-08</td>
<td>2022-09-21</td>
<td style="color:#18bc9c">上柜</td>
<td>2023-02-21 23:01:25</td><td>35</td>
<td style="color:#f75444"><svg viewBox="0 -1536 1536 1792" style="width:12.00px;height:14px;vertical-align:-2.00px;" fill="#f75444"><path transform="scale(1,-1)" d="M1536 640q0 -209 -103 -385.5t-279.5 -279.5t-385.5 -103t-385.5 103t-279.5 279.5t-103 385.5t103 385.5t279.5 279.5t385.5 103t385.5 -103t279.5 -279.5t103 -385.5z"/></svg> 已结束</td>
<td><span class="ab" style="width:24px;background:#868aa0"><svg viewBox="0 -1536 1792 1792" style="width:12.00px;height:12px;vertical-align:-1.71px;" fill="#fff"><path transform="scale(1,-1)" d="M1792 640q0 -26 -19 -45l-256 -256q-19 -19 -45 -19t-45 19t-19 45v128h-384v-384h128q26 0 45 -19t19 -45t-19 -45l-256 -256q-19 -19 -45 -19t-45 19l-256 256q-19 19 -19 45t19 45t45 19h128v384h-384v-128q0 -26 -19 -45t-45 -19t-45 19l-256 256q-19 19 -19 45 t19 45l256 256q19 19 45 19t45 -19t19 -45v-128h384v384h-128q-26 0 -45 19t-19 45t19 45l256 256q19 19 45 19t45 -19l256 -256q19 -19 19 -45t-19 -45t-45 -19h-128v-384h384v128q0 26 19 45t45 19t45 -19l256 -256q19 -19 19 -45z"/></svg></span><span class="ab" style="width:22px;background:#18bc9c;margin-left:4px"><svg viewBox="0 -1536 1536 1792" style="width:10.29px;height:12px;vertical-align:-1.71px;" fill="#fff"><path transform="scale(1,-1)" d="M363 0l91 91l-235 235l-91 -91v-107h128v-128h107zM886 928q0 22 -22 22q-10 0 -17 -7l-542 -542q-7 -7 -7 -17q0 -22 22 -22q10 0 17 7l542 542q7 7 7 17zM832 1120l416 -416l-832 -832h-416v416zM1515 1024q0 -53 -37 -90l-166 -166l-416 416l166 165q36 38 90 38 q53 0 91 -38l235 -234q37 -39 37 -91z"/></svg></span><span class="ab" style="width:22px;background:#f75444;margin-left:4px"><svg viewBox="0 -1536 1408 1792" style="width:9.43px;height:12px;vertical-align:-1.71px;" fill="#fff"><path transform="scale(1,-1)" d="M512 160v704q0 14 -9 23t-23 9h-64q-14 0 -23 -9t-9 -23v-704q0 -14 9 -23t23 -9h64q14 0 23 9t9 23zM768 160v704q0 14 -9 23t-23 9h-64q-14 0 -23 -9t-9 -23v-704q0 -14 9 -23t23 -9h64q14 0 23 9t9 23zM1024 160v704q0 14 -9 23t-23 9h-64q-14 0 -23 -9t-9 -23v-704 q0 -14 9 -23t23 -9h64q14 0 23 9t9 23zM480 1152h448l-48 117q-7 9 -17 11h-317q-10 -2 -17 -11zM1408 1120v-64q0 -14 -9 -23t-23 -9h-96v-948q0 -83 -47 -143.5t-113 -60.5h-832q-66 0 -113 58.5t-47 141.5v952h-96q-14 0 -23 9t-9 23v64q0 14 9 23t23 9h309l70 167 q15 37 54 63t79 26h320q40 0 79 -26t54 -63l70 -167h309q14 0 23 -9t9 -23z"/></svg></span></td></tr>
<tr><td><span class="cb"></span></td>
<td>8</td>
<td>立積</td>
<td>TWS:4968:STOCK</td>
<td>4968</td>
<td>112.50</td>
<td>105.00</td>
<td>145</td>
<td>5000</td>
<td>2022-09-06</td>
<td>2022-08-31</td>
<td>2022-09-02</td>
<td>2022-09-15</td>
<td style="color:#444c69">上市</td>
<td>2023-02-21 23:01:25</td><td>1</td>
<td style="color:#f75444"><svg viewBox="0 -1536 1536 1792" style="width:12.00px;height:14px;vertical-align:-2.00px;" fill="#f75444"><path transform="scale(1,-1)" d="M1536 640q0 -209 -103 -385.5t-279.5 -279.5t-385.5 -103t-385.5 103t-279.5 279.5t-103 385.5t103 385.5t279.5 279.5t385.5 103t385.5 -103t279.5 -279.5t103 -385.5z"/></svg> 已结束</td>
<td><span class="ab" style="width:24px;background:#868aa0"><svg viewBox="0 -1536 1792 1792" style="width:12.00px;height:12px;vertical-align:-1.71px;" fill="#fff"><path transform="scale(1,-1)" d="M1792 640q0 -26 -19 -45l-256 -256q-19 -19 -45 -19t-45 19t-19 45v128h-384v-384h128q26 0 45 -19t19 -45t-19 -45l-256 -256q-19 -19 -45 -19t-45 19l-256 256q-19 19 -19 45t19 45t45 19h128v384h-384v-128q0 -26 -19 -45t-45 -19t-45 19l-256 256q-19 19 -19 45 t19 45l256 256q19 19 45 19t45 -19t19 -45v-128h384v384h-128q-26 0 -45 19t-19 45t19 45l256 256q19 19 45 19t45 -19l256 -256q19 -19 19 -45t-19 -45t-45 -19h-128v-384h384v128q0 26 19 45t45 19t45 -19l256 -256q19 -19 19 -45z"/></svg></span><span class="ab" style="width:22px;background:#18bc9c;margin-left:4px"><svg viewBox="0 -1536 1536 1792" style="width:10.29px;height:12px;vertical-align:-1.71px;" fill="#fff"><path transform="scale(1,-1)" d="M363 0l91 91l-235 235l-91 -91v-107h128v-128h107zM886 928q0 22 -22 22q-10 0 -17 -7l-542 -542q-7 -7 -7 -17q0 -22 22 -22q10 0 17 7l542 542q7 7 7 17zM832 1120l416 -416l-832 -832h-416v416zM1515 1024q0 -53 -37 -90l-166 -166l-416 416l166 165q36 38 90 38 q53 0 91 -38l235 -234q37 -39 37 -91z"/></svg></span><span class="ab" style="width:22px;background:#f75444;margin-left:4px"><svg viewBox="0 -1536 1408 1792" style="width:9.43px;height:12px;vertical-align:-1.71px;" fill="#fff"><path transform="scale(1,-1)" d="M512 160v704q0 14 -9 23t-23 9h-64q-14 0 -23 -9t-9 -23v-704q0 -14 9 -23t23 -9h64q14 0 23 9t9 23zM768 160v704q0 14 -9 23t-23 9h-64q-14 0 -23 -9t-9 -23v-704q0 -14 9 -23t23 -9h64q14 0 23 9t9 23zM1024 160v704q0 14 -9 23t-23 9h-64q-14 0 -23 -9t-9 -23v-704 q0 -14 9 -23t23 -9h64q14 0 23 9t9 23zM480 1152h448l-48 117q-7 9 -17 11h-317q-10 -2 -17 -11zM1408 1120v-64q0 -14 -9 -23t-23 -9h-96v-948q0 -83 -47 -143.5t-113 -60.5h-832q-66 0 -113 58.5t-47 141.5v952h-96q-14 0 -23 9t-9 23v64q0 14 9 23t23 9h309l70 167 q15 37 54 63t79 26h320q40 0 79 -26t54 -63l70 -167h309q14 0 23 -9t9 -23z"/></svg></span></td></tr>
<tr><td><span class="cb"></span></td>
<td>7</td>
<td>碩禾</td>
<td>TWS:3691:STOCK</td>
<td>3691</td>
<td>99.50</td>
<td>115.00</td>
<td>1360</td>
<td>20</td>
<td>2022-09-08</td>
<td>2022-09-02</td>
<td>2022-09-06</td>
<td>2022-09-19</td>
<td style="color:#18bc9c">上柜</td>
<td>2023-02-21 23:01:25</td><td>1</td>
<td style="color:#f75444"><svg viewBox="0 -1536 1536 1792" style="width:12.00px;height:14px;vertical-align:-2.00px;" fill="#f75444"><path transform="scale(1,-1)" d="M1536 640q0 -209 -103 -385.5t-279.5 -279.5t-385.5 -103t-385.5 103t-279.5 279.5t-103 385.5t103 385.5t279.5 279.5t385.5 103t385.5 -103t279.5 -279.5t103 -385.5z"/></svg> 已结束</td>
<td><span class="ab" style="width:24px;background:#868aa0"><svg viewBox="0 -1536 1792 1792" style="width:12.00px;height:12px;vertical-align:-1.71px;" fill="#fff"><path transform="scale(1,-1)" d="M1792 640q0 -26 -19 -45l-256 -256q-19 -19 -45 -19t-45 19t-19 45v128h-384v-384h128q26 0 45 -19t19 -45t-19 -45l-256 -256q-19 -19 -45 -19t-45 19l-256 256q-19 19 -19 45t19 45t45 19h128v384h-384v-128q0 -26 -19 -45t-45 -19t-45 19l-256 256q-19 19 -19 45 t19 45l256 256q19 19 45 19t45 -19t19 -45v-128h384v384h-128q-26 0 -45 19t-19 45t19 45l256 256q19 19 45 19t45 -19l256 -256q19 -19 19 -45t-19 -45t-45 -19h-128v-384h384v128q0 26 19 45t45 19t45 -19l256 -256q19 -19 19 -45z"/></svg></span><span class="ab" style="width:22px;background:#18bc9c;margin-left:4px"><svg viewBox="0 -1536 1536 1792" style="width:10.29px;height:12px;vertical-align:-1.71px;" fill="#fff"><path transform="scale(1,-1)" d="M363 0l91 91l-235 235l-91 -91v-107h128v-128h107zM886 928q0 22 -22 22q-10 0 -17 -7l-542 -542q-7 -7 -7 -17q0 -22 22 -22q10 0 17 7l542 542q7 7 7 17zM832 1120l416 -416l-832 -832h-416v416zM1515 1024q0 -53 -37 -90l-166 -166l-416 416l166 165q36 38 90 38 q53 0 91 -38l235 -234q37 -39 37 -91z"/></svg></span><span class="ab" style="width:22px;background:#f75444;margin-left:4px"><svg viewBox="0 -1536 1408 1792" style="width:9.43px;height:12px;vertical-align:-1.71px;" fill="#fff"><path transform="scale(1,-1)" d="M512 160v704q0 14 -9 23t-23 9h-64q-14 0 -23 -9t-9 -23v-704q0 -14 9 -23t23 -9h64q14 0 23 9t9 23zM768 160v704q0 14 -9 23t-23 9h-64q-14 0 -23 -9t-9 -23v-704q0 -14 9 -23t23 -9h64q14 0 23 9t9 23zM1024 160v704q0 14 -9 23t-23 9h-64q-14 0 -23 -9t-9 -23v-704 q0 -14 9 -23t23 -9h64q14 0 23 9t9 23zM480 1152h448l-48 117q-7 9 -17 11h-317q-10 -2 -17 -11zM1408 1120v-64q0 -14 -9 -23t-23 -9h-96v-948q0 -83 -47 -143.5t-113 -60.5h-832q-66 0 -113 58.5t-47 141.5v952h-96q-14 0 -23 9t-9 23v64q0 14 9 23t23 9h309l70 167 q15 37 54 63t79 26h320q40 0 79 -26t54 -63l70 -167h309q14 0 23 -9t9 -23z"/></svg></span></td></tr>
<tr><td><span class="cb"></span></td>
<td>6</td>
<td>凱鈺</td>
<td>TWS:5468:STOCK</td>
<td>5468</td>
<td>21.20</td>
<td>10.00</td>
<td>680</td>
<td>0</td>
<td>2021-03-09</td>
<td>2021-03-03</td>
<td>2021-03-05</td>
<td>2021-03-17</td>
<td style="color:#18bc9c">上柜</td>
<td>2023-02-21 23:01:25</td><td>1</td>
<td style="color:#f75444"><svg viewBox="0 -1536 1536 1792" style="width:12.00px;height:14px;vertical-align:-2.00px;" fill="#f75444"><path transform="scale(1,-1)" d="M1536 640q0 -209 -103 -385.5t-279.5 -279.5t-385.5 -103t-385.5 103t-279.5 279.5t-103 385.5t103 385.5t279.5 279.5t385.5 103t385.5 -103t279.5 -279.5t103 -385.5z"/></svg> 已结束</td>
<td><span class="ab" style="width:24px;background:#868aa0"><svg viewBox="0 -1536 1792 1792" style="width:12.00px;height:12px;vertical-align:-1.71px;" fill="#fff"><path transform="scale(1,-1)" d="M1792 640q0 -26 -19 -45l-256 -256q-19 -19 -45 -19t-45 19t-19 45v128h-384v-384h128q26 0 45 -19t19 -45t-19 -45l-256 -256q-19 -19 -45 -19t-45 19l-256 256q-19 19 -19 45t19 45t45 19h128v384h-384v-128q0 -26 -19 -45t-45 -19t-45 19l-256 256q-19 19 -19 45 t19 45l256 256q19 19 45 19t45 -19t19 -45v-128h384v384h-128q-26 0 -45 19t-19 45t19 45l256 256q19 19 45 19t45 -19l256 -256q19 -19 19 -45t-19 -45t-45 -19h-128v-384h384v128q0 26 19 45t45 19t45 -19l256 -256q19 -19 19 -45z"/></svg></span><span class="ab" style="width:22px;background:#18bc9c;margin-left:4px"><svg viewBox="0 -1536 1536 1792" style="width:10.29px;height:12px;vertical-align:-1.71px;" fill="#fff"><path transform="scale(1,-1)" d="M363 0l91 91l-235 235l-91 -91v-107h128v-128h107zM886 928q0 22 -22 22q-10 0 -17 -7l-542 -542q-7 -7 -7 -17q0 -22 22 -22q10 0 17 7l542 542q7 7 7 17zM832 1120l416 -416l-832 -832h-416v416zM1515 1024q0 -53 -37 -90l-166 -166l-416 416l166 165q36 38 90 38 q53 0 91 -38l235 -234q37 -39 37 -91z"/></svg></span><span class="ab" style="width:22px;background:#f75444;margin-left:4px"><svg viewBox="0 -1536 1408 1792" style="width:9.43px;height:12px;vertical-align:-1.71px;" fill="#fff"><path transform="scale(1,-1)" d="M512 160v704q0 14 -9 23t-23 9h-64q-14 0 -23 -9t-9 -23v-704q0 -14 9 -23t23 -9h64q14 0 23 9t9 23zM768 160v704q0 14 -9 23t-23 9h-64q-14 0 -23 -9t-9 -23v-704q0 -14 9 -23t23 -9h64q14 0 23 9t9 23zM1024 160v704q0 14 -9 23t-23 9h-64q-14 0 -23 -9t-9 -23v-704 q0 -14 9 -23t23 -9h64q14 0 23 9t9 23zM480 1152h448l-48 117q-7 9 -17 11h-317q-10 -2 -17 -11zM1408 1120v-64q0 -14 -9 -23t-23 -9h-96v-948q0 -83 -47 -143.5t-113 -60.5h-832q-66 0 -113 58.5t-47 141.5v952h-96q-14 0 -23 9t-9 23v64q0 14 9 23t23 9h309l70 167 q15 37 54 63t79 26h320q40 0 79 -26t54 -63l70 -167h309q14 0 23 -9t9 -23z"/></svg></span></td></tr>
<tr><td><span class="cb"></span></td>
<td>9</td>
<td>動力-KY</td>
<td>TWS:6591:STOCK</td>
<td>6591</td>
<td>61.60</td>
<td>47.00</td>
<td>170</td>
<td>0</td>
<td>2020-09-30</td>
<td>2020-09-24</td>
<td>2020-09-28</td>
<td>2020-10-13</td>
<td style="color:#444c69">上市</td>
<td>2023-02-21 23:01:25</td><td>1</td>
<td style="color:#f75444"><svg viewBox="0 -1536 1536 1792" style="width:12.00px;height:14px;vertical-align:-2.00px;" fill="#f75444"><path transform="scale(1,-1)" d="M1536 640q0 -209 -103 -385.5t-279.5 -279.5t-385.5 -103t-385.5 103t-279.5 279.5t-103 385.5t103 385.5t279.5 279.5t385.5 103t385.5 -103t279.5 -279.5t103 -385.5z"/></svg> 已结束</td>
<td><span class="ab" style="width:24px;background:#868aa0"><svg viewBox="0 -1536 1792 1792" style="width:12.00px;height:12px;vertical-align:-1.71px;" fill="#fff"><path transform="scale(1,-1)" d="M1792 640q0 -26 -19 -45l-256 -256q-19 -19 -45 -19t-45 19t-19 45v128h-384v-384h128q26 0 45 -19t19 -45t-19 -45l-256 -256q-19 -19 -45 -19t-45 19l-256 256q-19 19 -19 45t19 45t45 19h128v384h-384v-128q0 -26 -19 -45t-45 -19t-45 19l-256 256q-19 19 -19 45 t19 45l256 256q19 19 45 19t45 -19t19 -45v-128h384v384h-128q-26 0 -45 19t-19 45t19 45l256 256q19 19 45 19t45 -19l256 -256q19 -19 19 -45t-19 -45t-45 -19h-128v-384h384v128q0 26 19 45t45 19t45 -19l256 -256q19 -19 19 -45z"/></svg></span><span class="ab" style="width:22px;background:#18bc9c;margin-left:4px"><svg viewBox="0 -1536 1536 1792" style="width:10.29px;height:12px;vertical-align:-1.71px;" fill="#fff"><path transform="scale(1,-1)" d="M363 0l91 91l-235 235l-91 -91v-107h128v-128h107zM886 928q0 22 -22 22q-10 0 -17 -7l-542 -542q-7 -7 -7 -17q0 -22 22 -22q10 0 17 7l542 542q7 7 7 17zM832 1120l416 -416l-832 -832h-416v416zM1515 1024q0 -53 -37 -90l-166 -166l-416 416l166 165q36 38 90 38 q53 0 91 -38l235 -234q37 -39 37 -91z"/></svg></span><span class="ab" style="width:22px;background:#f75444;margin-left:4px"><svg viewBox="0 -1536 1408 1792" style="width:9.43px;height:12px;vertical-align:-1.71px;" fill="#fff"><path transform="scale(1,-1)" d="M512 160v704q0 14 -9 23t-23 9h-64q-14 0 -23 -9t-9 -23v-704q0 -14 9 -23t23 -9h64q14 0 23 9t9 23zM768 160v704q0 14 -9 23t-23 9h-64q-14 0 -23 -9t-9 -23v-704q0 -14 9 -23t23 -9h64q14 0 23 9t9 23zM1024 160v704q0 14 -9 23t-23 9h-64q-14 0 -23 -9t-9 -23v-704 q0 -14 9 -23t23 -9h64q14 0 23 9t9 23zM480 1152h448l-48 117q-7 9 -17 11h-317q-10 -2 -17 -11zM1408 1120v-64q0 -14 -9 -23t-23 -9h-96v-948q0 -83 -47 -143.5t-113 -60.5h-832q-66 0 -113 58.5t-47 141.5v952h-96q-14 0 -23 9t-9 23v64q0 14 9 23t23 9h309l70 167 q15 37 54 63t79 26h320q40 0 79 -26t54 -63l70 -167h309q14 0 23 -9t9 -23z"/></svg></span></td></tr>
<tr><td><span class="cb"></span></td>
<td>10</td>
<td>伊雲谷</td>
<td>TWS:6689:STOCK</td>
<td>6689</td>
<td>82.50</td>
<td>112.00</td>
<td>1760</td>
<td>0</td>
<td>2022-09-06</td>
<td>2022-08-31</td>
<td>2022-09-02</td>
<td>2022-09-13</td>
<td style="color:#444c69">上市</td>
<td>2023-02-21 23:01:25</td><td>1</td>
<td style="color:#f75444"><svg viewBox="0 -1536 1536 1792" style="width:12.00px;height:14px;vertical-align:-2.00px;" fill="#f75444"><path transform="scale(1,-1)" d="M1536 640q0 -209 -103 -385.5t-279.5 -279.5t-385.5 -103t-385.5 103t-279.5 279.5t-103 385.5t103 385.5t279.5 279.5t385.5 103t385.5 -103t279.5 -279.5t103 -385.5z"/></svg> 已结束</td>
<td><span class="ab" style="width:24px;background:#868aa0"><svg viewBox="0 -1536 1792 1792" style="width:12.00px;height:12px;vertical-align:-1.71px;" fill="#fff"><path transform="scale(1,-1)" d="M1792 640q0 -26 -19 -45l-256 -256q-19 -19 -45 -19t-45 19t-19 45v128h-384v-384h128q26 0 45 -19t19 -45t-19 -45l-256 -256q-19 -19 -45 -19t-45 19l-256 256q-19 19 -19 45t19 45t45 19h128v384h-384v-128q0 -26 -19 -45t-45 -19t-45 19l-256 256q-19 19 -19 45 t19 45l256 256q19 19 45 19t45 -19t19 -45v-128h384v384h-128q-26 0 -45 19t-19 45t19 45l256 256q19 19 45 19t45 -19l256 -256q19 -19 19 -45t-19 -45t-45 -19h-128v-384h384v128q0 26 19 45t45 19t45 -19l256 -256q19 -19 19 -45z"/></svg></span><span class="ab" style="width:22px;background:#18bc9c;margin-left:4px"><svg viewBox="0 -1536 1536 1792" style="width:10.29px;height:12px;vertical-align:-1.71px;" fill="#fff"><path transform="scale(1,-1)" d="M363 0l91 91l-235 235l-91 -91v-107h128v-128h107zM886 928q0 22 -22 22q-10 0 -17 -7l-542 -542q-7 -7 -7 -17q0 -22 22 -22q10 0 17 7l542 542q7 7 7 17zM832 1120l416 -416l-832 -832h-416v416zM1515 1024q0 -53 -37 -90l-166 -166l-416 416l166 165q36 38 90 38 q53 0 91 -38l235 -234q37 -39 37 -91z"/></svg></span><span class="ab" style="width:22px;background:#f75444;margin-left:4px"><svg viewBox="0 -1536 1408 1792" style="width:9.43px;height:12px;vertical-align:-1.71px;" fill="#fff"><path transform="scale(1,-1)" d="M512 160v704q0 14 -9 23t-23 9h-64q-14 0 -23 -9t-9 -23v-704q0 -14 9 -23t23 -9h64q14 0 23 9t9 23zM768 160v704q0 14 -9 23t-23 9h-64q-14 0 -23 -9t-9 -23v-704q0 -14 9 -23t23 -9h64q14 0 23 9t9 23zM1024 160v704q0 14 -9 23t-23 9h-64q-14 0 -23 -9t-9 -23v-704 q0 -14 9 -23t23 -9h64q14 0 23 9t9 23zM480 1152h448l-48 117q-7 9 -17 11h-317q-10 -2 -17 -11zM1408 1120v-64q0 -14 -9 -23t-23 -9h-96v-948q0 -83 -47 -143.5t-113 -60.5h-832q-66 0 -113 58.5t-47 141.5v952h-96q-14 0 -23 9t-9 23v64q0 14 9 23t23 9h309l70 167 q15 37 54 63t79 26h320q40 0 79 -26t54 -63l70 -167h309q14 0 23 -9t9 -23z"/></svg></span></td></tr>
<tr><td><span class="cb"></span></td>
<td>11</td>
<td>材料-KY</td>
<td>TWS:4763:STOCK</td>
<td>4763</td>
<td>178.00</td>
<td>100.00</td>
<td>256</td>
<td>0</td>
<td>2022-09-05</td>
<td>2022-08-30</td>
<td>2022-09-01</td>
<td>2022-09-14</td>
<td style="color:#444c69">上市</td>
<td>2023-02-21 23:01:25</td><td>1</td>
<td style="color:#f75444"><svg viewBox="0 -1536 1536 1792" style="width:12.00px;height:14px;vertical-align:-2.00px;" fill="#f75444"><path transform="scale(1,-1)" d="M1536 640q0 -209 -103 -385.5t-279.5 -279.5t-385.5 -103t-385.5 103t-279.5 279.5t-103 385.5t103 385.5t279.5 279.5t385.5 103t385.5 -103t279.5 -279.5t103 -385.5z"/></svg> 已结束</td>
<td><span class="ab" style="width:24px;background:#868aa0"><svg viewBox="0 -1536 1792 1792" style="width:12.00px;height:12px;vertical-align:-1.71px;" fill="#fff"><path transform="scale(1,-1)" d="M1792 640q0 -26 -19 -45l-256 -256q-19 -19 -45 -19t-45 19t-19 45v128h-384v-384h128q26 0 45 -19t19 -45t-19 -45l-256 -256q-19 -19 -45 -19t-45 19l-256 256q-19 19 -19 45t19 45t45 19h128v384h-384v-128q0 -26 -19 -45t-45 -19t-45 19l-256 256q-19 19 -19 45 t19 45l256 256q19 19 45 19t45 -19t19 -45v-128h384v384h-128q-26 0 -45 19t-19 45t19 45l256 256q19 19 45 19t45 -19l256 -256q19 -19 19 -45t-19 -45t-45 -19h-128v-384h384v128q0 26 19 45t45 19t45 -19l256 -256q19 -19 19 -45z"/></svg></span><span class="ab" style="width:22px;background:#18bc9c;margin-left:4px"><svg viewBox="0 -1536 1536 1792" style="width:10.29px;height:12px;vertical-align:-1.71px;" fill="#fff"><path transform="scale(1,-1)" d="M363 0l91 91l-235 235l-91 -91v-107h128v-128h107zM886 928q0 22 -22 22q-10 0 -17 -7l-542 -542q-7 -7 -7 -17q0 -22 22 -22q10 0 17 7l542 542q7 7 7 17zM832 1120l416 -416l-832 -832h-416v416zM1515 1024q0 -53 -37 -90l-166 -166l-416 416l166 165q36 38 90 38 q53 0 91 -38l235 -234q37 -39 37 -91z"/></svg></span><span class="ab" style="width:22px;background:#f75444;margin-left:4px"><svg viewBox="0 -1536 1408 1792" style="width:9.43px;height:12px;vertical-align:-1.71px;" fill="#fff"><path transform="scale(1,-1)" d="M512 160v704q0 14 -9 23t-23 9h-64q-14 0 -23 -9t-9 -23v-704q0 -14 9 -23t23 -9h64q14 0 23 9t9 23zM768 160v704q0 14 -9 23t-23 9h-64q-14 0 -23 -9t-9 -23v-704q0 -14 9 -23t23 -9h64q14 0 23 9t9 23zM1024 160v704q0 14 -9 23t-23 9h-64q-14 0 -23 -9t-9 -23v-704 q0 -14 9 -23t23 -9h64q14 0 23 9t9 23zM480 1152h448l-48 117q-7 9 -17 11h-317q-10 -2 -17 -11zM1408 1120v-64q0 -14 -9 -23t-23 -9h-96v-948q0 -83 -47 -143.5t-113 -60.5h-832q-66 0 -113 58.5t-47 141.5v952h-96q-14 0 -23 9t-9 23v64q0 14 9 23t23 9h309l70 167 q15 37 54 63t79 26h320q40 0 79 -26t54 -63l70 -167h309q14 0 23 -9t9 -23z"/></svg></span></td></tr>
<tr><td><span class="cb"></span></td>
<td>12</td>
<td>信紘科</td>
<td>TWS:6667:STOCK</td>
<td>6667</td>
<td>67.10</td>
<td>47.00</td>
<td>357</td>
<td>0</td>
<td>2020-10-26</td>
<td>2020-10-20</td>
<td>2020-10-22</td>
<td>2020-11-03</td>
<td style="color:#18bc9c">上柜</td>
<td>2023-02-21 23:01:25</td><td>1</td>
<td style="color:#f75444"><svg viewBox="0 -1536 1536 1792" style="width:12.00px;height:14px;vertical-align:-2.00px;" fill="#f75444"><path transform="scale(1,-1)" d="M1536 640q0 -209 -103 -385.5t-279.5 -279.5t-385.5 -103t-385.5 103t-279.5 279.5t-103 385.5t103 385.5t279.5 279.5t385.5 103t385.5 -103t279.5 -279.5t103 -385.5z"/></svg> 已结束</td>
<td><span class="ab" style="width:24px;background:#868aa0"><svg viewBox="0 -1536 1792 1792" style="width:12.00px;height:12px;vertical-align:-1.71px;" fill="#fff"><path transform="scale(1,-1)" d="M1792 640q0 -26 -19 -45l-256 -256q-19 -19 -45 -19t-45 19t-19 45v128h-384v-384h128q26 0 45 -19t19 -45t-19 -45l-256 -256q-19 -19 -45 -19t-45 19l-256 256q-19 19 -19 45t19 45t45 19h128v384h-384v-128q0 -26 -19 -45t-45 -19t-45 19l-256 256q-19 19 -19 45 t19 45l256 256q19 19 45 19t45 -19t19 -45v-128h384v384h-128q-26 0 -45 19t-19 45t19 45l256 256q19 19 45 19t45 -19l256 -256q19 -19 19 -45t-19 -45t-45 -19h-128v-384h384v128q0 26 19 45t45 19t45 -19l256 -256q19 -19 19 -45z"/></svg></span><span class="ab" style="width:22px;background:#18bc9c;margin-left:4px"><svg viewBox="0 -1536 1536 1792" style="width:10.29px;height:12px;vertical-align:-1.71px;" fill="#fff"><path transform="scale(1,-1)" d="M363 0l91 91l-235 235l-91 -91v-107h128v-128h107zM886 928q0 22 -22 22q-10 0 -17 -7l-542 -542q-7 -7 -7 -17q0 -22 22 -22q10 0 17 7l542 542q7 7 7 17zM832 1120l416 -416l-832 -832h-416v416zM1515 1024q0 -53 -37 -90l-166 -166l-416 416l166 165q36 38 90 38 q53 0 91 -38l235 -234q37 -39 37 -91z"/></svg></span><span class="ab" style="width:22px;background:#f75444;margin-left:4px"><svg viewBox="0 -1536 1408 1792" style="width:9.43px;height:12px;vertical-align:-1.71px;" fill="#fff"><path transform="scale(1,-1)" d="M512 160v704q0 14 -9 23t-23 9h-64q-14 0 -23 -9t-9 -23v-704q0 -14 9 -23t23 -9h64q14 0 23 9t9 23zM768 160v704q0 14 -9 23t-23 9h-64q-14 0 -23 -9t-9 -23v-704q0 -14 9 -23t23 -9h64q14 0 23 9t9 23zM1024 160v704q0 14 -9 23t-23 9h-64q-14 0 -23 -9t-9 -23v-704 q0 -14 9 -23t23 -9h64q14 0 23 9t9 23zM480 1152h448l-48 117q-7 9 -17 11h-317q-10 -2 -17 -11zM1408 1120v-64q0 -14 -9 -23t-23 -9h-96v-948q0 -83 -47 -143.5t-113 -60.5h-832q-66 0 -113 58.5t-47 141.5v952h-96q-14 0 -23 9t-9 23v64q0 14 9 23t23 9h309l70 167 q15 37 54 63t79 26h320q40 0 79 -26t54 -63l70 -167h309q14 0 23 -9t9 -23z"/></svg></span></td></tr>
<tr><td><span class="cb"></span></td>
<td>13</td>
<td>奇鈦科</td>
<td>TWS:3430:STOCK</td>
<td>3430</td>
<td>42.45</td>
<td>42.00</td>
<td>776</td>
<td>0</td>
<td>2022-09-02</td>
<td>2022-08-29</td>
<td>2022-08-31</td>
<td>2022-09-08</td>
<td style="color:#18bc9c">上柜</td>
<td>2023-02-21 23:01:25</td><td>1</td>
<td style="color:#f75444"><svg viewBox="0 -1536 1536 1792" style="width:12.00px;height:14px;vertical-align:-2.00px;" fill="#f75444"><path transform="scale(1,-1)" d="M1536 640q0 -209 -103 -385.5t-279.5 -279.5t-385.5 -103t-385.5 103t-279.5 279.5t-103 385.5t103 385.5t279.5 279.5t385.5 103t385.5 -103t279.5 -279.5t103 -385.5z"/></svg> 已结束</td>
<td><span class="ab" style="width:24px;background:#868aa0"><svg viewBox="0 -1536 1792 1792" style="width:12.00px;height:12px;vertical-align:-1.71px;" fill="#fff"><path transform="scale(1,-1)" d="M1792 640q0 -26 -19 -45l-256 -256q-19 -19 -45 -19t-45 19t-19 45v128h-384v-384h128q26 0 45 -19t19 -45t-19 -45l-256 -256q-19 -19 -45 -19t-45 19l-256 256q-19 19 -19 45t19 45t45 19h128v384h-384v-128q0 -26 -19 -45t-45 -19t-45 19l-256 256q-19 19 -19 45 t19 45l256 256q19 19 45 19t45 -19t19 -45v-128h384v384h-128q-26 0 -45 19t-19 45t19 45l256 256q19 19 45 19t45 -19l256 -256q19 -19 19 -45t-19 -45t-45 -19h-128v-384h384v128q0 26 19 45t45 19t45 -19l256 -256q19 -19 19 -45z"/></svg></span><span class="ab" style="width:22px;background:#18bc9c;margin-left:4px"><svg viewBox="0 -1536 1536 1792" style="width:10.29px;height:12px;vertical-align:-1.71px;" fill="#fff"><path transform="scale(1,-1)" d="M363 0l91 91l-235 235l-91 -91v-107h128v-128h107zM886 928q0 22 -22 22q-10 0 -17 -7l-542 -542q-7 -7 -7 -17q0 -22 22 -22q10 0 17 7l542 542q7 7 7 17zM832 1120l416 -416l-832 -832h-416v416zM1515 1024q0 -53 -37 -90l-166 -166l-416 416l166 165q36 38 90 38 q53 0 91 -38l235 -234q37 -39 37 -91z"/></svg></span><span class="ab" style="width:22px;background:#f75444;margin-left:4px"><svg viewBox="0 -1536 1408 1792" style="width:9.43px;height:12px;vertical-align:-1.71px;" fill="#fff"><path transform="scale(1,-1)" d="M512 160v704q0 14 -9 23t-23 9h-64q-14 0 -23 -9t-9 -23v-704q0 -14 9 -23t23 -9h64q14 0 23 9t9 23zM768 160v704q0 14 -9 23t-23 9h-64q-14 0 -23 -9t-9 -23v-704q0 -14 9 -23t23 -9h64q14 0 23 9t9 23zM1024 160v704q0 14 -9 23t-23 9h-64q-14 0 -23 -9t-9 -23v-704 q0 -14 9 -23t23 -9h64q14 0 23 9t9 23zM480 1152h448l-48 117q-7 9 -17 11h-317q-10 -2 -17 -11zM1408 1120v-64q0 -14 -9 -23t-23 -9h-96v-948q0 -83 -47 -143.5t-113 -60.5h-832q-66 0 -113 58.5t-47 141.5v952h-96q-14 0 -23 9t-9 23v64q0 14 9 23t23 9h309l70 167 q15 37 54 63t79 26h320q40 0 79 -26t54 -63l70 -167h309q14 0 23 -9t9 -23z"/></svg></span></td></tr>
<tr><td><span class="cb"></span></td>
<td>14</td>
<td>正德</td>
<td>TWS:2641:STOCK</td>
<td>2641</td>
<td>26.50</td>
<td>28.00</td>
<td>3062</td>
<td>0</td>
<td>2021-07-27</td>
<td>2021-07-21</td>
<td>2021-07-23</td>
<td>2021-08-04</td>
<td style="color:#18bc9c">上柜</td>
<td>2023-02-21 23:01:25</td><td>1</td>
<td style="color:#f75444"><svg viewBox="0 -1536 1536 1792" style="width:12.00px;height:14px;vertical-align:-2.00px;" fill="#f75444"><path transform="scale(1,-1)" d="M1536 640q0 -209 -103 -385.5t-279.5 -279.5t-385.5 -103t-385.5 103t-279.5 279.5t-103 385.5t103 385.5t279.5 279.5t385.5 103t385.5 -103t279.5 -279.5t103 -385.5z"/></svg> 已结束</td>
<td><span class="ab" style="width:24px;background:#868aa0"><svg viewBox="0 -1536 1792 1792" style="width:12.00px;height:12px;vertical-align:-1.71px;" fill="#fff"><path transform="scale(1,-1)" d="M1792 640q0 -26 -19 -45l-256 -256q-19 -19 -45 -19t-45 19t-19 45v128h-384v-384h128q26 0 45 -19t19 -45t-19 -45l-256 -256q-19 -19 -45 -19t-45 19l-256 256q-19 19 -19 45t19 45t45 19h128v384h-384v-128q0 -26 -19 -45t-45 -19t-45 19l-256 256q-19 19 -19 45 t19 45l256 256q19 19 45 19t45 -19t19 -45v-128h384v384h-128q-26 0 -45 19t-19 45t19 45l256 256q19 19 45 19t45 -19l256 -256q19 -19 19 -45t-19 -45t-45 -19h-128v-384h384v128q0 26 19 45t45 19t45 -19l256 -256q19 -19 19 -45z"/></svg></span><span class="ab" style="width:22px;background:#18bc9c;margin-left:4px"><svg viewBox="0 -1536 1536 1792" style="width:10.29px;height:12px;vertical-align:-1.71px;" fill="#fff"><path transform="scale(1,-1)" d="M363 0l91 91l-235 235l-91 -91v-107h128v-128h107zM886 928q0 22 -22 22q-10 0 -17 -7l-542 -542q-7 -7 -7 -17q0 -22 22 -22q10 0 17 7l542 542q7 7 7 17zM832 1120l416 -416l-832 -832h-416v416zM1515 1024q0 -53 -37 -90l-166 -166l-416 416l166 165q36 38 90 38 q53 0 91 -38l235 -234q37 -39 37 -91z"/></svg></span><span class="ab" style="width:22px;background:#f75444;margin-left:4px"><svg viewBox="0 -1536 1408 1792" style="width:9.43px;height:12px;vertical-align:-1.71px;" fill="#fff"><path transform="scale(1,-1)" d="M512 160v704q0 14 -9 23t-23 9h-64q-14 0 -23 -9t-9 -23v-704q0 -14 9 -23t23 -9h64q14 0 23 9t9 23zM768 160v704q0 14 -9 23t-23 9h-64q-14 0 -23 -9t-9 -23v-704q0 -14 9 -23t23 -9h64q14 0 23 9t9 23zM1024 160v704q0 14 -9 23t-23 9h-64q-14 0 -23 -9t-9 -23v-704 q0 -14 9 -23t23 -9h64q14 0 23 9t9 23zM480 1152h448l-48 117q-7 9 -17 11h-317q-10 -2 -17 -11zM1408 1120v-64q0 -14 -9 -23t-23 -9h-96v-948q0 -83 -47 -143.5t-113 -60.5h-832q-66 0 -113 58.5t-47 141.5v952h-96q-14 0 -23 9t-9 23v64q0 14 9 23t23 9h309l70 167 q15 37 54 63t79 26h320q40 0 79 -26t54 -63l70 -167h309q14 0 23 -9t9 -23z"/></svg></span></td></tr>
</tbody></table></div>
<div class="abs" style="left:1782px;top:190px;width:108px;height:512px;overflow:hidden;box-shadow:0 0 9px rgba(0,0,0,.10);background:#fff">
<table style="width:108px"><thead><tr><th style="border-left:none">操作</th></tr></thead><tbody>
<tr><td style="border-left:none"><span class="ab" style="width:24px;background:#868aa0"><svg viewBox="0 -1536 1792 1792" style="width:12.00px;height:12px;vertical-align:-1.71px;" fill="#fff"><path transform="scale(1,-1)" d="M1792 640q0 -26 -19 -45l-256 -256q-19 -19 -45 -19t-45 19t-19 45v128h-384v-384h128q26 0 45 -19t19 -45t-19 -45l-256 -256q-19 -19 -45 -19t-45 19l-256 256q-19 19 -19 45t19 45t45 19h128v384h-384v-128q0 -26 -19 -45t-45 -19t-45 19l-256 256q-19 19 -19 45 t19 45l256 256q19 19 45 19t45 -19t19 -45v-128h384v384h-128q-26 0 -45 19t-19 45t19 45l256 256q19 19 45 19t45 -19l256 -256q19 -19 19 -45t-19 -45t-45 -19h-128v-384h384v128q0 26 19 45t45 19t45 -19l256 -256q19 -19 19 -45z"/></svg></span><span class="ab" style="width:22px;background:#18bc9c;margin-left:4px"><svg viewBox="0 -1536 1536 1792" style="width:10.29px;height:12px;vertical-align:-1.71px;" fill="#fff"><path transform="scale(1,-1)" d="M363 0l91 91l-235 235l-91 -91v-107h128v-128h107zM886 928q0 22 -22 22q-10 0 -17 -7l-542 -542q-7 -7 -7 -17q0 -22 22 -22q10 0 17 7l542 542q7 7 7 17zM832 1120l416 -416l-832 -832h-416v416zM1515 1024q0 -53 -37 -90l-166 -166l-416 416l166 165q36 38 90 38 q53 0 91 -38l235 -234q37 -39 37 -91z"/></svg></span><span class="ab" style="width:22px;background:#f75444;margin-left:4px"><svg viewBox="0 -1536 1408 1792" style="width:9.43px;height:12px;vertical-align:-1.71px;" fill="#fff"><path transform="scale(1,-1)" d="M512 160v704q0 14 -9 23t-23 9h-64q-14 0 -23 -9t-9 -23v-704q0 -14 9 -23t23 -9h64q14 0 23 9t9 23zM768 160v704q0 14 -9 23t-23 9h-64q-14 0 -23 -9t-9 -23v-704q0 -14 9 -23t23 -9h64q14 0 23 9t9 23zM1024 160v704q0 14 -9 23t-23 9h-64q-14 0 -23 -9t-9 -23v-704 q0 -14 9 -23t23 -9h64q14 0 23 9t9 23zM480 1152h448l-48 117q-7 9 -17 11h-317q-10 -2 -17 -11zM1408 1120v-64q0 -14 -9 -23t-23 -9h-96v-948q0 -83 -47 -143.5t-113 -60.5h-832q-66 0 -113 58.5t-47 141.5v952h-96q-14 0 -23 9t-9 23v64q0 14 9 23t23 9h309l70 167 q15 37 54 63t79 26h320q40 0 79 -26t54 -63l70 -167h309q14 0 23 -9t9 -23z"/></svg></span></td></tr>
<tr><td style="border-left:none"><span class="ab" style="width:24px;background:#868aa0"><svg viewBox="0 -1536 1792 1792" style="width:12.00px;height:12px;vertical-align:-1.71px;" fill="#fff"><path transform="scale(1,-1)" d="M1792 640q0 -26 -19 -45l-256 -256q-19 -19 -45 -19t-45 19t-19 45v128h-384v-384h128q26 0 45 -19t19 -45t-19 -45l-256 -256q-19 -19 -45 -19t-45 19l-256 256q-19 19 -19 45t19 45t45 19h128v384h-384v-128q0 -26 -19 -45t-45 -19t-45 19l-256 256q-19 19 -19 45 t19 45l256 256q19 19 45 19t45 -19t19 -45v-128h384v384h-128q-26 0 -45 19t-19 45t19 45l256 256q19 19 45 19t45 -19l256 -256q19 -19 19 -45t-19 -45t-45 -19h-128v-384h384v128q0 26 19 45t45 19t45 -19l256 -256q19 -19 19 -45z"/></svg></span><span class="ab" style="width:22px;background:#18bc9c;margin-left:4px"><svg viewBox="0 -1536 1536 1792" style="width:10.29px;height:12px;vertical-align:-1.71px;" fill="#fff"><path transform="scale(1,-1)" d="M363 0l91 91l-235 235l-91 -91v-107h128v-128h107zM886 928q0 22 -22 22q-10 0 -17 -7l-542 -542q-7 -7 -7 -17q0 -22 22 -22q10 0 17 7l542 542q7 7 7 17zM832 1120l416 -416l-832 -832h-416v416zM1515 1024q0 -53 -37 -90l-166 -166l-416 416l166 165q36 38 90 38 q53 0 91 -38l235 -234q37 -39 37 -91z"/></svg></span><span class="ab" style="width:22px;background:#f75444;margin-left:4px"><svg viewBox="0 -1536 1408 1792" style="width:9.43px;height:12px;vertical-align:-1.71px;" fill="#fff"><path transform="scale(1,-1)" d="M512 160v704q0 14 -9 23t-23 9h-64q-14 0 -23 -9t-9 -23v-704q0 -14 9 -23t23 -9h64q14 0 23 9t9 23zM768 160v704q0 14 -9 23t-23 9h-64q-14 0 -23 -9t-9 -23v-704q0 -14 9 -23t23 -9h64q14 0 23 9t9 23zM1024 160v704q0 14 -9 23t-23 9h-64q-14 0 -23 -9t-9 -23v-704 q0 -14 9 -23t23 -9h64q14 0 23 9t9 23zM480 1152h448l-48 117q-7 9 -17 11h-317q-10 -2 -17 -11zM1408 1120v-64q0 -14 -9 -23t-23 -9h-96v-948q0 -83 -47 -143.5t-113 -60.5h-832q-66 0 -113 58.5t-47 141.5v952h-96q-14 0 -23 9t-9 23v64q0 14 9 23t23 9h309l70 167 q15 37 54 63t79 26h320q40 0 79 -26t54 -63l70 -167h309q14 0 23 -9t9 -23z"/></svg></span></td></tr>
<tr><td style="border-left:none"><span class="ab" style="width:24px;background:#868aa0"><svg viewBox="0 -1536 1792 1792" style="width:12.00px;height:12px;vertical-align:-1.71px;" fill="#fff"><path transform="scale(1,-1)" d="M1792 640q0 -26 -19 -45l-256 -256q-19 -19 -45 -19t-45 19t-19 45v128h-384v-384h128q26 0 45 -19t19 -45t-19 -45l-256 -256q-19 -19 -45 -19t-45 19l-256 256q-19 19 -19 45t19 45t45 19h128v384h-384v-128q0 -26 -19 -45t-45 -19t-45 19l-256 256q-19 19 -19 45 t19 45l256 256q19 19 45 19t45 -19t19 -45v-128h384v384h-128q-26 0 -45 19t-19 45t19 45l256 256q19 19 45 19t45 -19l256 -256q19 -19 19 -45t-19 -45t-45 -19h-128v-384h384v128q0 26 19 45t45 19t45 -19l256 -256q19 -19 19 -45z"/></svg></span><span class="ab" style="width:22px;background:#18bc9c;margin-left:4px"><svg viewBox="0 -1536 1536 1792" style="width:10.29px;height:12px;vertical-align:-1.71px;" fill="#fff"><path transform="scale(1,-1)" d="M363 0l91 91l-235 235l-91 -91v-107h128v-128h107zM886 928q0 22 -22 22q-10 0 -17 -7l-542 -542q-7 -7 -7 -17q0 -22 22 -22q10 0 17 7l542 542q7 7 7 17zM832 1120l416 -416l-832 -832h-416v416zM1515 1024q0 -53 -37 -90l-166 -166l-416 416l166 165q36 38 90 38 q53 0 91 -38l235 -234q37 -39 37 -91z"/></svg></span><span class="ab" style="width:22px;background:#f75444;margin-left:4px"><svg viewBox="0 -1536 1408 1792" style="width:9.43px;height:12px;vertical-align:-1.71px;" fill="#fff"><path transform="scale(1,-1)" d="M512 160v704q0 14 -9 23t-23 9h-64q-14 0 -23 -9t-9 -23v-704q0 -14 9 -23t23 -9h64q14 0 23 9t9 23zM768 160v704q0 14 -9 23t-23 9h-64q-14 0 -23 -9t-9 -23v-704q0 -14 9 -23t23 -9h64q14 0 23 9t9 23zM1024 160v704q0 14 -9 23t-23 9h-64q-14 0 -23 -9t-9 -23v-704 q0 -14 9 -23t23 -9h64q14 0 23 9t9 23zM480 1152h448l-48 117q-7 9 -17 11h-317q-10 -2 -17 -11zM1408 1120v-64q0 -14 -9 -23t-23 -9h-96v-948q0 -83 -47 -143.5t-113 -60.5h-832q-66 0 -113 58.5t-47 141.5v952h-96q-14 0 -23 9t-9 23v64q0 14 9 23t23 9h309l70 167 q15 37 54 63t79 26h320q40 0 79 -26t54 -63l70 -167h309q14 0 23 -9t9 -23z"/></svg></span></td></tr>
<tr><td style="border-left:none"><span class="ab" style="width:24px;background:#868aa0"><svg viewBox="0 -1536 1792 1792" style="width:12.00px;height:12px;vertical-align:-1.71px;" fill="#fff"><path transform="scale(1,-1)" d="M1792 640q0 -26 -19 -45l-256 -256q-19 -19 -45 -19t-45 19t-19 45v128h-384v-384h128q26 0 45 -19t19 -45t-19 -45l-256 -256q-19 -19 -45 -19t-45 19l-256 256q-19 19 -19 45t19 45t45 19h128v384h-384v-128q0 -26 -19 -45t-45 -19t-45 19l-256 256q-19 19 -19 45 t19 45l256 256q19 19 45 19t45 -19t19 -45v-128h384v384h-128q-26 0 -45 19t-19 45t19 45l256 256q19 19 45 19t45 -19l256 -256q19 -19 19 -45t-19 -45t-45 -19h-128v-384h384v128q0 26 19 45t45 19t45 -19l256 -256q19 -19 19 -45z"/></svg></span><span class="ab" style="width:22px;background:#18bc9c;margin-left:4px"><svg viewBox="0 -1536 1536 1792" style="width:10.29px;height:12px;vertical-align:-1.71px;" fill="#fff"><path transform="scale(1,-1)" d="M363 0l91 91l-235 235l-91 -91v-107h128v-128h107zM886 928q0 22 -22 22q-10 0 -17 -7l-542 -542q-7 -7 -7 -17q0 -22 22 -22q10 0 17 7l542 542q7 7 7 17zM832 1120l416 -416l-832 -832h-416v416zM1515 1024q0 -53 -37 -90l-166 -166l-416 416l166 165q36 38 90 38 q53 0 91 -38l235 -234q37 -39 37 -91z"/></svg></span><span class="ab" style="width:22px;background:#f75444;margin-left:4px"><svg viewBox="0 -1536 1408 1792" style="width:9.43px;height:12px;vertical-align:-1.71px;" fill="#fff"><path transform="scale(1,-1)" d="M512 160v704q0 14 -9 23t-23 9h-64q-14 0 -23 -9t-9 -23v-704q0 -14 9 -23t23 -9h64q14 0 23 9t9 23zM768 160v704q0 14 -9 23t-23 9h-64q-14 0 -23 -9t-9 -23v-704q0 -14 9 -23t23 -9h64q14 0 23 9t9 23zM1024 160v704q0 14 -9 23t-23 9h-64q-14 0 -23 -9t-9 -23v-704 q0 -14 9 -23t23 -9h64q14 0 23 9t9 23zM480 1152h448l-48 117q-7 9 -17 11h-317q-10 -2 -17 -11zM1408 1120v-64q0 -14 -9 -23t-23 -9h-96v-948q0 -83 -47 -143.5t-113 -60.5h-832q-66 0 -113 58.5t-47 141.5v952h-96q-14 0 -23 9t-9 23v64q0 14 9 23t23 9h309l70 167 q15 37 54 63t79 26h320q40 0 79 -26t54 -63l70 -167h309q14 0 23 -9t9 -23z"/></svg></span></td></tr>
<tr><td style="border-left:none"><span class="ab" style="width:24px;background:#868aa0"><svg viewBox="0 -1536 1792 1792" style="width:12.00px;height:12px;vertical-align:-1.71px;" fill="#fff"><path transform="scale(1,-1)" d="M1792 640q0 -26 -19 -45l-256 -256q-19 -19 -45 -19t-45 19t-19 45v128h-384v-384h128q26 0 45 -19t19 -45t-19 -45l-256 -256q-19 -19 -45 -19t-45 19l-256 256q-19 19 -19 45t19 45t45 19h128v384h-384v-128q0 -26 -19 -45t-45 -19t-45 19l-256 256q-19 19 -19 45 t19 45l256 256q19 19 45 19t45 -19t19 -45v-128h384v384h-128q-26 0 -45 19t-19 45t19 45l256 256q19 19 45 19t45 -19l256 -256q19 -19 19 -45t-19 -45t-45 -19h-128v-384h384v128q0 26 19 45t45 19t45 -19l256 -256q19 -19 19 -45z"/></svg></span><span class="ab" style="width:22px;background:#18bc9c;margin-left:4px"><svg viewBox="0 -1536 1536 1792" style="width:10.29px;height:12px;vertical-align:-1.71px;" fill="#fff"><path transform="scale(1,-1)" d="M363 0l91 91l-235 235l-91 -91v-107h128v-128h107zM886 928q0 22 -22 22q-10 0 -17 -7l-542 -542q-7 -7 -7 -17q0 -22 22 -22q10 0 17 7l542 542q7 7 7 17zM832 1120l416 -416l-832 -832h-416v416zM1515 1024q0 -53 -37 -90l-166 -166l-416 416l166 165q36 38 90 38 q53 0 91 -38l235 -234q37 -39 37 -91z"/></svg></span><span class="ab" style="width:22px;background:#f75444;margin-left:4px"><svg viewBox="0 -1536 1408 1792" style="width:9.43px;height:12px;vertical-align:-1.71px;" fill="#fff"><path transform="scale(1,-1)" d="M512 160v704q0 14 -9 23t-23 9h-64q-14 0 -23 -9t-9 -23v-704q0 -14 9 -23t23 -9h64q14 0 23 9t9 23zM768 160v704q0 14 -9 23t-23 9h-64q-14 0 -23 -9t-9 -23v-704q0 -14 9 -23t23 -9h64q14 0 23 9t9 23zM1024 160v704q0 14 -9 23t-23 9h-64q-14 0 -23 -9t-9 -23v-704 q0 -14 9 -23t23 -9h64q14 0 23 9t9 23zM480 1152h448l-48 117q-7 9 -17 11h-317q-10 -2 -17 -11zM1408 1120v-64q0 -14 -9 -23t-23 -9h-96v-948q0 -83 -47 -143.5t-113 -60.5h-832q-66 0 -113 58.5t-47 141.5v952h-96q-14 0 -23 9t-9 23v64q0 14 9 23t23 9h309l70 167 q15 37 54 63t79 26h320q40 0 79 -26t54 -63l70 -167h309q14 0 23 -9t9 -23z"/></svg></span></td></tr>
<tr><td style="border-left:none"><span class="ab" style="width:24px;background:#868aa0"><svg viewBox="0 -1536 1792 1792" style="width:12.00px;height:12px;vertical-align:-1.71px;" fill="#fff"><path transform="scale(1,-1)" d="M1792 640q0 -26 -19 -45l-256 -256q-19 -19 -45 -19t-45 19t-19 45v128h-384v-384h128q26 0 45 -19t19 -45t-19 -45l-256 -256q-19 -19 -45 -19t-45 19l-256 256q-19 19 -19 45t19 45t45 19h128v384h-384v-128q0 -26 -19 -45t-45 -19t-45 19l-256 256q-19 19 -19 45 t19 45l256 256q19 19 45 19t45 -19t19 -45v-128h384v384h-128q-26 0 -45 19t-19 45t19 45l256 256q19 19 45 19t45 -19l256 -256q19 -19 19 -45t-19 -45t-45 -19h-128v-384h384v128q0 26 19 45t45 19t45 -19l256 -256q19 -19 19 -45z"/></svg></span><span class="ab" style="width:22px;background:#18bc9c;margin-left:4px"><svg viewBox="0 -1536 1536 1792" style="width:10.29px;height:12px;vertical-align:-1.71px;" fill="#fff"><path transform="scale(1,-1)" d="M363 0l91 91l-235 235l-91 -91v-107h128v-128h107zM886 928q0 22 -22 22q-10 0 -17 -7l-542 -542q-7 -7 -7 -17q0 -22 22 -22q10 0 17 7l542 542q7 7 7 17zM832 1120l416 -416l-832 -832h-416v416zM1515 1024q0 -53 -37 -90l-166 -166l-416 416l166 165q36 38 90 38 q53 0 91 -38l235 -234q37 -39 37 -91z"/></svg></span><span class="ab" style="width:22px;background:#f75444;margin-left:4px"><svg viewBox="0 -1536 1408 1792" style="width:9.43px;height:12px;vertical-align:-1.71px;" fill="#fff"><path transform="scale(1,-1)" d="M512 160v704q0 14 -9 23t-23 9h-64q-14 0 -23 -9t-9 -23v-704q0 -14 9 -23t23 -9h64q14 0 23 9t9 23zM768 160v704q0 14 -9 23t-23 9h-64q-14 0 -23 -9t-9 -23v-704q0 -14 9 -23t23 -9h64q14 0 23 9t9 23zM1024 160v704q0 14 -9 23t-23 9h-64q-14 0 -23 -9t-9 -23v-704 q0 -14 9 -23t23 -9h64q14 0 23 9t9 23zM480 1152h448l-48 117q-7 9 -17 11h-317q-10 -2 -17 -11zM1408 1120v-64q0 -14 -9 -23t-23 -9h-96v-948q0 -83 -47 -143.5t-113 -60.5h-832q-66 0 -113 58.5t-47 141.5v952h-96q-14 0 -23 9t-9 23v64q0 14 9 23t23 9h309l70 167 q15 37 54 63t79 26h320q40 0 79 -26t54 -63l70 -167h309q14 0 23 -9t9 -23z"/></svg></span></td></tr>
<tr><td style="border-left:none"><span class="ab" style="width:24px;background:#868aa0"><svg viewBox="0 -1536 1792 1792" style="width:12.00px;height:12px;vertical-align:-1.71px;" fill="#fff"><path transform="scale(1,-1)" d="M1792 640q0 -26 -19 -45l-256 -256q-19 -19 -45 -19t-45 19t-19 45v128h-384v-384h128q26 0 45 -19t19 -45t-19 -45l-256 -256q-19 -19 -45 -19t-45 19l-256 256q-19 19 -19 45t19 45t45 19h128v384h-384v-128q0 -26 -19 -45t-45 -19t-45 19l-256 256q-19 19 -19 45 t19 45l256 256q19 19 45 19t45 -19t19 -45v-128h384v384h-128q-26 0 -45 19t-19 45t19 45l256 256q19 19 45 19t45 -19l256 -256q19 -19 19 -45t-19 -45t-45 -19h-128v-384h384v128q0 26 19 45t45 19t45 -19l256 -256q19 -19 19 -45z"/></svg></span><span class="ab" style="width:22px;background:#18bc9c;margin-left:4px"><svg viewBox="0 -1536 1536 1792" style="width:10.29px;height:12px;vertical-align:-1.71px;" fill="#fff"><path transform="scale(1,-1)" d="M363 0l91 91l-235 235l-91 -91v-107h128v-128h107zM886 928q0 22 -22 22q-10 0 -17 -7l-542 -542q-7 -7 -7 -17q0 -22 22 -22q10 0 17 7l542 542q7 7 7 17zM832 1120l416 -416l-832 -832h-416v416zM1515 1024q0 -53 -37 -90l-166 -166l-416 416l166 165q36 38 90 38 q53 0 91 -38l235 -234q37 -39 37 -91z"/></svg></span><span class="ab" style="width:22px;background:#f75444;margin-left:4px"><svg viewBox="0 -1536 1408 1792" style="width:9.43px;height:12px;vertical-align:-1.71px;" fill="#fff"><path transform="scale(1,-1)" d="M512 160v704q0 14 -9 23t-23 9h-64q-14 0 -23 -9t-9 -23v-704q0 -14 9 -23t23 -9h64q14 0 23 9t9 23zM768 160v704q0 14 -9 23t-23 9h-64q-14 0 -23 -9t-9 -23v-704q0 -14 9 -23t23 -9h64q14 0 23 9t9 23zM1024 160v704q0 14 -9 23t-23 9h-64q-14 0 -23 -9t-9 -23v-704 q0 -14 9 -23t23 -9h64q14 0 23 9t9 23zM480 1152h448l-48 117q-7 9 -17 11h-317q-10 -2 -17 -11zM1408 1120v-64q0 -14 -9 -23t-23 -9h-96v-948q0 -83 -47 -143.5t-113 -60.5h-832q-66 0 -113 58.5t-47 141.5v952h-96q-14 0 -23 9t-9 23v64q0 14 9 23t23 9h309l70 167 q15 37 54 63t79 26h320q40 0 79 -26t54 -63l70 -167h309q14 0 23 -9t9 -23z"/></svg></span></td></tr>
<tr><td style="border-left:none"><span class="ab" style="width:24px;background:#868aa0"><svg viewBox="0 -1536 1792 1792" style="width:12.00px;height:12px;vertical-align:-1.71px;" fill="#fff"><path transform="scale(1,-1)" d="M1792 640q0 -26 -19 -45l-256 -256q-19 -19 -45 -19t-45 19t-19 45v128h-384v-384h128q26 0 45 -19t19 -45t-19 -45l-256 -256q-19 -19 -45 -19t-45 19l-256 256q-19 19 -19 45t19 45t45 19h128v384h-384v-128q0 -26 -19 -45t-45 -19t-45 19l-256 256q-19 19 -19 45 t19 45l256 256q19 19 45 19t45 -19t19 -45v-128h384v384h-128q-26 0 -45 19t-19 45t19 45l256 256q19 19 45 19t45 -19l256 -256q19 -19 19 -45t-19 -45t-45 -19h-128v-384h384v128q0 26 19 45t45 19t45 -19l256 -256q19 -19 19 -45z"/></svg></span><span class="ab" style="width:22px;background:#18bc9c;margin-left:4px"><svg viewBox="0 -1536 1536 1792" style="width:10.29px;height:12px;vertical-align:-1.71px;" fill="#fff"><path transform="scale(1,-1)" d="M363 0l91 91l-235 235l-91 -91v-107h128v-128h107zM886 928q0 22 -22 22q-10 0 -17 -7l-542 -542q-7 -7 -7 -17q0 -22 22 -22q10 0 17 7l542 542q7 7 7 17zM832 1120l416 -416l-832 -832h-416v416zM1515 1024q0 -53 -37 -90l-166 -166l-416 416l166 165q36 38 90 38 q53 0 91 -38l235 -234q37 -39 37 -91z"/></svg></span><span class="ab" style="width:22px;background:#f75444;margin-left:4px"><svg viewBox="0 -1536 1408 1792" style="width:9.43px;height:12px;vertical-align:-1.71px;" fill="#fff"><path transform="scale(1,-1)" d="M512 160v704q0 14 -9 23t-23 9h-64q-14 0 -23 -9t-9 -23v-704q0 -14 9 -23t23 -9h64q14 0 23 9t9 23zM768 160v704q0 14 -9 23t-23 9h-64q-14 0 -23 -9t-9 -23v-704q0 -14 9 -23t23 -9h64q14 0 23 9t9 23zM1024 160v704q0 14 -9 23t-23 9h-64q-14 0 -23 -9t-9 -23v-704 q0 -14 9 -23t23 -9h64q14 0 23 9t9 23zM480 1152h448l-48 117q-7 9 -17 11h-317q-10 -2 -17 -11zM1408 1120v-64q0 -14 -9 -23t-23 -9h-96v-948q0 -83 -47 -143.5t-113 -60.5h-832q-66 0 -113 58.5t-47 141.5v952h-96q-14 0 -23 9t-9 23v64q0 14 9 23t23 9h309l70 167 q15 37 54 63t79 26h320q40 0 79 -26t54 -63l70 -167h309q14 0 23 -9t9 -23z"/></svg></span></td></tr>
<tr><td style="border-left:none"><span class="ab" style="width:24px;background:#868aa0"><svg viewBox="0 -1536 1792 1792" style="width:12.00px;height:12px;vertical-align:-1.71px;" fill="#fff"><path transform="scale(1,-1)" d="M1792 640q0 -26 -19 -45l-256 -256q-19 -19 -45 -19t-45 19t-19 45v128h-384v-384h128q26 0 45 -19t19 -45t-19 -45l-256 -256q-19 -19 -45 -19t-45 19l-256 256q-19 19 -19 45t19 45t45 19h128v384h-384v-128q0 -26 -19 -45t-45 -19t-45 19l-256 256q-19 19 -19 45 t19 45l256 256q19 19 45 19t45 -19t19 -45v-128h384v384h-128q-26 0 -45 19t-19 45t19 45l256 256q19 19 45 19t45 -19l256 -256q19 -19 19 -45t-19 -45t-45 -19h-128v-384h384v128q0 26 19 45t45 19t45 -19l256 -256q19 -19 19 -45z"/></svg></span><span class="ab" style="width:22px;background:#18bc9c;margin-left:4px"><svg viewBox="0 -1536 1536 1792" style="width:10.29px;height:12px;vertical-align:-1.71px;" fill="#fff"><path transform="scale(1,-1)" d="M363 0l91 91l-235 235l-91 -91v-107h128v-128h107zM886 928q0 22 -22 22q-10 0 -17 -7l-542 -542q-7 -7 -7 -17q0 -22 22 -22q10 0 17 7l542 542q7 7 7 17zM832 1120l416 -416l-832 -832h-416v416zM1515 1024q0 -53 -37 -90l-166 -166l-416 416l166 165q36 38 90 38 q53 0 91 -38l235 -234q37 -39 37 -91z"/></svg></span><span class="ab" style="width:22px;background:#f75444;margin-left:4px"><svg viewBox="0 -1536 1408 1792" style="width:9.43px;height:12px;vertical-align:-1.71px;" fill="#fff"><path transform="scale(1,-1)" d="M512 160v704q0 14 -9 23t-23 9h-64q-14 0 -23 -9t-9 -23v-704q0 -14 9 -23t23 -9h64q14 0 23 9t9 23zM768 160v704q0 14 -9 23t-23 9h-64q-14 0 -23 -9t-9 -23v-704q0 -14 9 -23t23 -9h64q14 0 23 9t9 23zM1024 160v704q0 14 -9 23t-23 9h-64q-14 0 -23 -9t-9 -23v-704 q0 -14 9 -23t23 -9h64q14 0 23 9t9 23zM480 1152h448l-48 117q-7 9 -17 11h-317q-10 -2 -17 -11zM1408 1120v-64q0 -14 -9 -23t-23 -9h-96v-948q0 -83 -47 -143.5t-113 -60.5h-832q-66 0 -113 58.5t-47 141.5v952h-96q-14 0 -23 9t-9 23v64q0 14 9 23t23 9h309l70 167 q15 37 54 63t79 26h320q40 0 79 -26t54 -63l70 -167h309q14 0 23 -9t9 -23z"/></svg></span></td></tr>
<tr><td style="border-left:none"><span class="ab" style="width:24px;background:#868aa0"><svg viewBox="0 -1536 1792 1792" style="width:12.00px;height:12px;vertical-align:-1.71px;" fill="#fff"><path transform="scale(1,-1)" d="M1792 640q0 -26 -19 -45l-256 -256q-19 -19 -45 -19t-45 19t-19 45v128h-384v-384h128q26 0 45 -19t19 -45t-19 -45l-256 -256q-19 -19 -45 -19t-45 19l-256 256q-19 19 -19 45t19 45t45 19h128v384h-384v-128q0 -26 -19 -45t-45 -19t-45 19l-256 256q-19 19 -19 45 t19 45l256 256q19 19 45 19t45 -19t19 -45v-128h384v384h-128q-26 0 -45 19t-19 45t19 45l256 256q19 19 45 19t45 -19l256 -256q19 -19 19 -45t-19 -45t-45 -19h-128v-384h384v128q0 26 19 45t45 19t45 -19l256 -256q19 -19 19 -45z"/></svg></span><span class="ab" style="width:22px;background:#18bc9c;margin-left:4px"><svg viewBox="0 -1536 1536 1792" style="width:10.29px;height:12px;vertical-align:-1.71px;" fill="#fff"><path transform="scale(1,-1)" d="M363 0l91 91l-235 235l-91 -91v-107h128v-128h107zM886 928q0 22 -22 22q-10 0 -17 -7l-542 -542q-7 -7 -7 -17q0 -22 22 -22q10 0 17 7l542 542q7 7 7 17zM832 1120l416 -416l-832 -832h-416v416zM1515 1024q0 -53 -37 -90l-166 -166l-416 416l166 165q36 38 90 38 q53 0 91 -38l235 -234q37 -39 37 -91z"/></svg></span><span class="ab" style="width:22px;background:#f75444;margin-left:4px"><svg viewBox="0 -1536 1408 1792" style="width:9.43px;height:12px;vertical-align:-1.71px;" fill="#fff"><path transform="scale(1,-1)" d="M512 160v704q0 14 -9 23t-23 9h-64q-14 0 -23 -9t-9 -23v-704q0 -14 9 -23t23 -9h64q14 0 23 9t9 23zM768 160v704q0 14 -9 23t-23 9h-64q-14 0 -23 -9t-9 -23v-704q0 -14 9 -23t23 -9h64q14 0 23 9t9 23zM1024 160v704q0 14 -9 23t-23 9h-64q-14 0 -23 -9t-9 -23v-704 q0 -14 9 -23t23 -9h64q14 0 23 9t9 23zM480 1152h448l-48 117q-7 9 -17 11h-317q-10 -2 -17 -11zM1408 1120v-64q0 -14 -9 -23t-23 -9h-96v-948q0 -83 -47 -143.5t-113 -60.5h-832q-66 0 -113 58.5t-47 141.5v952h-96q-14 0 -23 9t-9 23v64q0 14 9 23t23 9h309l70 167 q15 37 54 63t79 26h320q40 0 79 -26t54 -63l70 -167h309q14 0 23 -9t9 -23z"/></svg></span></td></tr>
</tbody></table></div>
<div class="abs" style="left:260px;top:703px;width:1630px;height:16px;background:#f1f1f1"></div>
<div class="abs" style="left:277px;top:704px;width:1589px;height:13px;background:#c1c1c1"></div>
<div class="abs" style="left:266px;top:706px;border-right:4px solid #a3a3a3;border-top:4px solid transparent;border-bottom:4px solid transparent"></div>
<div class="abs" style="left:1880px;top:706px;border-left:4px solid #505050;border-top:4px solid transparent;border-bottom:4px solid transparent"></div>
<div class="abs" style="left:260px;top:736px;line-height:20px;white-space:nowrap">显示第 1 到第 10 条记录，总共 344 条记录 每页显示</div>
<div class="bd" style="left:591px;top:731px;width:52px;height:33px;border-radius:3px;font-size:13px;line-height:31px;padding-left:12px">10</div>
<div class="abs" style="left:622px;top:745px;border-bottom:4px solid #333;border-left:4px solid transparent;border-right:4px solid transparent"></div>
<div class="abs" style="left:647px;top:736px;line-height:20px;white-space:nowrap">条记录</div>
<div class="pg" style="left:1402.0px;width:67.0px;border-radius:3px 0 0 3px;">上一页</div>
<div class="pg" style="left:1469.0px;width:33.8px;background:#444c69;border-color:#444c69;color:#fff;z-index:2;">1</div>
<div class="pg" style="left:1501.8px;width:33.8px;">2</div>
<div class="pg" style="left:1534.6px;width:33.8px;">3</div>
<div class="pg" style="left:1567.4px;width:33.8px;">4</div>
<div class="pg" style="left:1600.2px;width:33.8px;">5</div>
<div class="pg" style="left:1633.0px;width:37.0px;background:#fff;color:#777;">...</div>
<div class="pg" style="left:1669.0px;width:42.0px;">35</div>
<div class="pg" style="left:1710.0px;width:67.5px;border-radius:0 3px 3px 0;">下一页</div>
<div class="abs" style="left:1783px;top:729px;width:50px;height:34px;border:1px solid #d2d6de;background:#fff"></div>
<div class="bd" style="left:1838px;top:730px;width:52px;height:33px;border-radius:3px;font-size:13px;line-height:31px;text-align:center">跳转</div>
<div class="abs" style="left:1673px;top:780px;width:167px;height:40px;background:#fff;border:1px solid #c8c8c8;border-radius:5px;box-shadow:0 4px 12px rgba(0,0,0,.22);font-size:13px;line-height:38px;padding-left:15.5px;color:#555;white-space:nowrap">WebSocket 链接已断开</div>
<svg class="abs" style="left:1838px;top:788px;width:12px;height:24px" viewBox="0 0 12 24"><path d="M0 1.500L10.500 12L0 22.500Z" fill="#fff"/><path d="M1 1.500L10.500 12L1 22.500" fill="none" stroke="#c8c8c8" stroke-width="1"/></svg>
<svg class="abs" style="left:1850px;top:775px;width:50px;height:50px" viewBox="0 0 50 50"><defs><clipPath id="bub"><circle cx="25.5" cy="25" r="16"/></clipPath></defs><circle cx="25" cy="25" r="25" fill="#1684fc"/><path d="M25.500 9a16 16 0 1 1 -8 29.860L10.800 39.600l1.500-5.600A16 16 0 0 1 25.500 9z" fill="#fff"/><circle cx="43.500" cy="17.500" r="12" fill="#7ab8ff" clip-path="url(#bub)"/></svg>
</body></html>
